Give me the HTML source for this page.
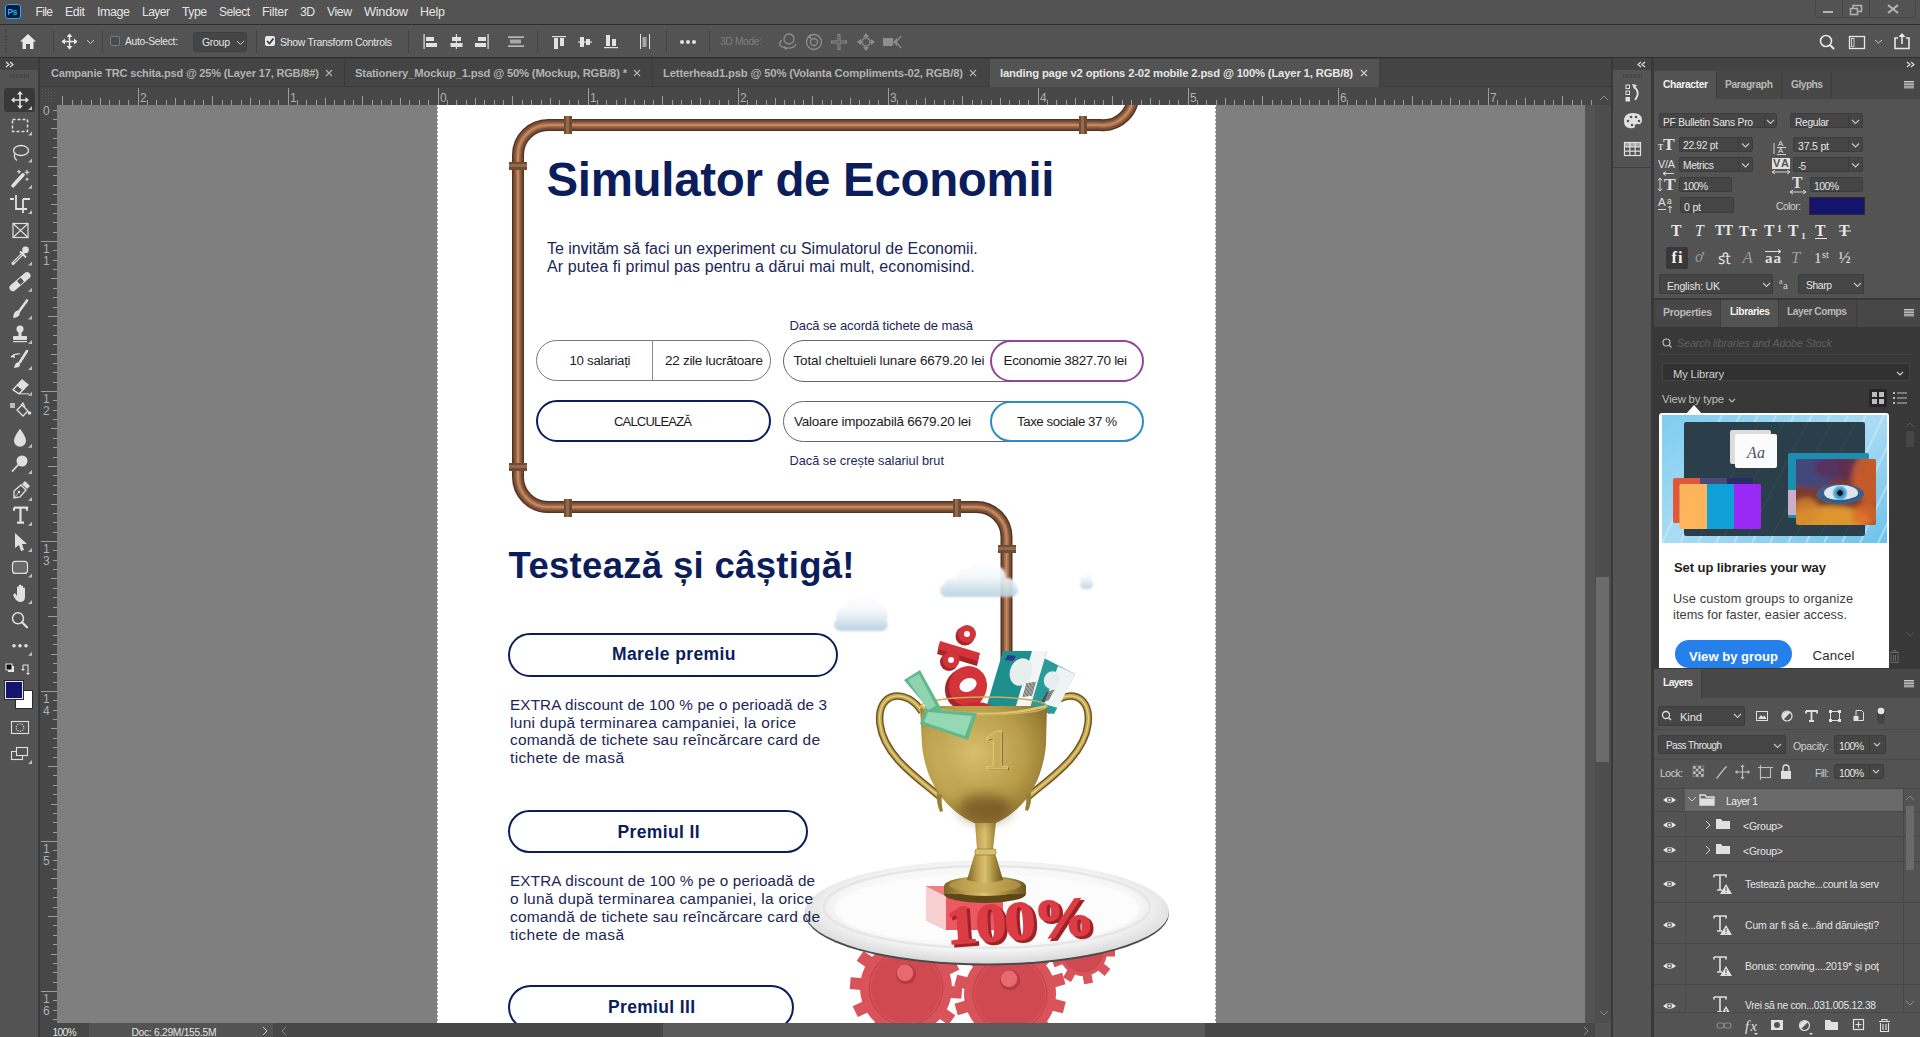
<!DOCTYPE html>
<html><head><meta charset="utf-8">
<style>
*{margin:0;padding:0;box-sizing:border-box}
html,body{width:1920px;height:1037px;overflow:hidden;background:#535353;font-family:"Liberation Sans",sans-serif}
.a{position:absolute}
.t{position:absolute;white-space:nowrap;line-height:1}
svg{position:absolute;overflow:visible}

</style></head>
<body>
<div class="a" style="left:0px;top:0px;width:1920px;height:24px;background:#535353;"></div>
<div class="a" style="left:0px;top:24px;width:1920px;height:1px;background:#2f2f2f;"></div>
<div class="a" style="left:5px;top:4px;width:16px;height:15px;background:#001e36;border:1px solid #31a8ff;border-radius:3px"></div>
<div class="t" style="left:7.50px;top:7.80px;font-size:8.5px;color:#31a8ff;font-weight:700;letter-spacing:-0.397px;">Ps</div>
<div class="t" style="left:35.50px;top:6.34px;font-size:12.0px;color:#e4e4e4;letter-spacing:-0.615px;">File</div>
<div class="t" style="left:65.00px;top:6.13px;font-size:12.25px;color:#e4e4e4;letter-spacing:-0.369px;">Edit</div>
<div class="t" style="left:97.00px;top:5.92px;font-size:12.5px;color:#e4e4e4;letter-spacing:-0.435px;">Image</div>
<div class="t" style="left:142.00px;top:6.34px;font-size:12.0px;color:#e4e4e4;letter-spacing:-0.504px;">Layer</div>
<div class="t" style="left:182.00px;top:6.13px;font-size:12.25px;color:#e4e4e4;letter-spacing:-0.519px;">Type</div>
<div class="t" style="left:219.00px;top:6.34px;font-size:12.0px;color:#e4e4e4;letter-spacing:-0.469px;">Select</div>
<div class="t" style="left:262.00px;top:6.13px;font-size:12.25px;color:#e4e4e4;letter-spacing:-0.244px;">Filter</div>
<div class="t" style="left:300.00px;top:6.13px;font-size:12.25px;color:#e4e4e4;letter-spacing:-0.659px;">3D</div>
<div class="t" style="left:327.00px;top:6.13px;font-size:12.25px;color:#e4e4e4;letter-spacing:-0.443px;">View</div>
<div class="t" style="left:364.00px;top:5.71px;font-size:12.75px;color:#e4e4e4;letter-spacing:-0.269px;">Window</div>
<div class="t" style="left:420.00px;top:5.92px;font-size:12.5px;color:#e4e4e4;letter-spacing:-0.236px;">Help</div>
<div class="a" style="left:1815px;top:-2px;width:101px;height:20px;border:1px solid #484848;border-top:none;border-radius:0 0 4px 4px"></div>
<div class="a" style="left:1842px;top:0px;width:1px;height:18px;background:#484848;"></div>
<div class="a" style="left:1869px;top:0px;width:1px;height:18px;background:#484848;"></div>
<div class="a" style="left:1823px;top:11px;width:10px;height:2px;background:#b4b4b4;"></div>
<svg class="a" style="left:0px;top:0px" width="1920" height="1037"><rect x="1850.5" y="8.5" width="7" height="6" fill="none" stroke="#b4b4b4" stroke-width="1.5"/><path d="M1853,8 V5.5 H1861.5 V11.5 H1858" fill="none" stroke="#b4b4b4" stroke-width="1.5"/><path d="M1888,5 L1898,13 M1898,5 L1888,13" stroke="#b4b4b4" stroke-width="2"/></svg>
<div class="a" style="left:0px;top:25px;width:1920px;height:32px;background:#535353;"></div>
<div class="a" style="left:0px;top:57px;width:1920px;height:1px;background:#2f2f2f;"></div>
<div class="a" style="left:5px;top:30px;width:2px;height:23px;background:transparent;background:repeating-linear-gradient(#3c3c3c 0 1px,transparent 1px 3px)"></div>
<svg class="a" style="left:0px;top:0px" width="1920" height="1037"><path d="M28,34 L20,41.5 H22.5 V49 H26 V44 H30 V49 H33.5 V41.5 H36 Z" fill="#e8e8e8"/></svg>
<div class="a" style="left:53px;top:30px;width:1px;height:23px;background:#434343;"></div>
<svg class="a" style="left:0px;top:0px" width="1920" height="1037"><path d="M69.5,34 V49 M62,41.5 H77" stroke="#e8e8e8" stroke-width="1.5"/><path d="M69.5,33.5 L66.5,37 H72.5Z M69.5,49.5 L66.5,46 H72.5Z M61.5,41.5 L65,38.5 V44.5Z M77.5,41.5 L74,38.5 V44.5Z" fill="#e8e8e8"/></svg>
<svg class="a" style="left:0px;top:0px" width="1920" height="1037"><path d="M87,40 L90.5,43.5 L94,40" fill="none" stroke="#c8c8c8" stroke-width="1"/></svg>
<div class="a" style="left:102px;top:30px;width:1px;height:23px;background:#434343;"></div>
<div class="a" style="left:110px;top:36px;width:10px;height:10px;border:1px solid #7a7a7a;border-radius:2px;background:#4a4a4a"></div>
<div class="t" style="left:125.00px;top:36.82px;font-size:10.25px;color:#e4e4e4;letter-spacing:-0.257px;">Auto-Select:</div>
<div class="a" style="left:193px;top:32px;width:54px;height:20px;background:#454545;border:1px solid #3e3e3e;border-radius:3px"></div>
<div class="t" style="left:202.00px;top:37.11px;font-size:10.5px;color:#e4e4e4;letter-spacing:-0.295px;">Group</div>
<svg class="a" style="left:0px;top:0px" width="1920" height="1037"><path d="M237,41 L240.5,44.5 L244,41" fill="none" stroke="#c8c8c8" stroke-width="1"/></svg>
<div class="a" style="left:256px;top:30px;width:1px;height:23px;background:#434343;"></div>
<div class="a" style="left:265px;top:36px;width:10px;height:10px;background:#e6e6e6;border-radius:2px"></div>
<svg class="a" style="left:0px;top:0px" width="1920" height="1037"><path d="M267,41 L269.5,43.5 L273.5,38.5" fill="none" stroke="#333" stroke-width="1.6"/></svg>
<div class="t" style="left:280.00px;top:36.61px;font-size:10.5px;color:#e4e4e4;letter-spacing:-0.293px;">Show Transform Controls</div>
<div class="a" style="left:408px;top:30px;width:1px;height:23px;background:#434343;"></div>
<svg class="a" style="left:0px;top:0px" width="1920" height="1037"><rect x="423.5" y="34" width="1.2" height="15" fill="#e2e2e2"/><rect x="426" y="37" width="8" height="4" fill="#e2e2e2"/><rect x="426" y="43" width="11" height="4" fill="#e2e2e2"/><rect x="455.8" y="34" width="1.2" height="15" fill="#e2e2e2"/><rect x="452" y="37" width="9" height="4" fill="#e2e2e2"/><rect x="450.5" y="43" width="12" height="4" fill="#e2e2e2"/><rect x="487.5" y="34" width="1.2" height="15" fill="#e2e2e2"/><rect x="478" y="37" width="8" height="4" fill="#e2e2e2"/><rect x="475" y="43" width="11" height="4" fill="#e2e2e2"/><rect x="508" y="36.5" width="16" height="1.2" fill="#e2e2e2"/><rect x="510" y="39.5" width="11" height="4" fill="#a8a8a8"/><rect x="508" y="45.5" width="16" height="1.2" fill="#e2e2e2"/><rect x="537" y="30" width="1" height="23" fill="#434343"/><rect x="552" y="36" width="14" height="1.2" fill="#e2e2e2"/><rect x="554" y="38" width="4" height="11" fill="#e2e2e2"/><rect x="560" y="38" width="4" height="8" fill="#e2e2e2"/><rect x="578" y="41.5" width="14" height="1.2" fill="#e2e2e2"/><rect x="580" y="37" width="4" height="10" fill="#e2e2e2"/><rect x="586" y="39" width="4" height="6" fill="#e2e2e2"/><rect x="604" y="47" width="14" height="1.2" fill="#e2e2e2"/><rect x="606" y="35" width="4" height="11" fill="#e2e2e2"/><rect x="612" y="39" width="4" height="7" fill="#e2e2e2"/><rect x="640" y="34" width="1" height="15" fill="#e2e2e2"/><rect x="642.5" y="37" width="4" height="10" fill="#a8a8a8"/><rect x="649" y="34" width="1" height="15" fill="#e2e2e2"/><rect x="666" y="30" width="1" height="23" fill="#434343"/><circle cx="682" cy="42" r="2" fill="#e2e2e2"/><circle cx="688" cy="42" r="2" fill="#e2e2e2"/><circle cx="694" cy="42" r="2" fill="#e2e2e2"/><rect x="709" y="30" width="1" height="23" fill="#434343"/></svg>
<div class="t" style="left:720.00px;top:36.82px;font-size:10.25px;color:#7e7e7e;letter-spacing:-0.348px;">3D Mode:</div>
<svg class="a" style="left:0px;top:0px" width="1920" height="1037"><circle cx="789" cy="39" r="5" fill="none" stroke="#8e8e8e" stroke-width="1.3"/><path d="M782,40 Q776,46 786,48 Q794,49 796,44" fill="none" stroke="#8e8e8e" stroke-width="1.3"/><path d="M784,46 L788,48 L785,50Z" fill="#8e8e8e"/><circle cx="814" cy="42" r="7.5" fill="none" stroke="#8e8e8e" stroke-width="1.3"/><circle cx="814" cy="42" r="3.5" fill="none" stroke="#8e8e8e" stroke-width="1.3"/><path d="M807,37 L811,34 L811,39Z" fill="#8e8e8e"/><path d="M839,34 V50 M831,42 H847" stroke="#8e8e8e" stroke-width="3"/><path d="M839,35 V49 M832,42 H846" stroke="#535353" stroke-width="1"/><circle cx="866" cy="42" r="4" fill="none" stroke="#8e8e8e" stroke-width="1.5"/><path d="M866,33 L863,37 H869Z M866,51 L863,47 H869Z M857,42 L861,39 V45Z M875,42 L871,39 V45Z" fill="#8e8e8e"/><rect x="883" y="38" width="10" height="8" fill="#8e8e8e"/><path d="M893,42 L897,38 V46Z" fill="#8e8e8e"/><path d="M901,36 L896,42 L901,48" fill="none" stroke="#8e8e8e" stroke-width="1.2"/></svg>
<svg class="a" style="left:0px;top:0px" width="1920" height="1037"><circle cx="1826" cy="41" r="5.5" fill="none" stroke="#e8e8e8" stroke-width="1.6"/><path d="M1830,45 L1834,49" stroke="#e8e8e8" stroke-width="2"/><rect x="1849.5" y="36.5" width="15" height="12" fill="none" stroke="#e8e8e8" stroke-width="1.3"/><rect x="1851.5" y="38.5" width="2.5" height="8" fill="none" stroke="#e8e8e8" stroke-width="0.8"/><path d="M1875,40 L1878.5,43 L1882,40" fill="none" stroke="#c8c8c8" stroke-width="1"/><path d="M1898,38 H1895 V48.5 H1909 V38 H1906" fill="none" stroke="#e8e8e8" stroke-width="1.6"/><path d="M1902,44 V35" stroke="#e8e8e8" stroke-width="1.6"/><path d="M1902,33 L1898.5,37 H1905.5Z" fill="#e8e8e8"/></svg>
<div class="a" style="left:0px;top:58px;width:38px;height:979px;background:#535353;"></div>
<div class="a" style="left:38px;top:58px;width:2px;height:979px;background:#393939;"></div>
<div class="a" style="left:0px;top:58px;width:38px;height:12px;background:#434343;"></div>
<div class="a" style="left:4px;top:88px;width:31px;height:24px;background:#383838;border-radius:3px"></div>
<svg class="a" style="left:0px;top:0px" width="1920" height="1037"><path d="M6,62 L9,64.5 L6,67 M10,62 L13,64.5 L10,67" fill="none" stroke="#e0e0e0" stroke-width="1.2"/><rect x="10" y="74" width="1" height="4" fill="#444"/><rect x="12" y="74" width="1" height="4" fill="#444"/><rect x="14" y="74" width="1" height="4" fill="#444"/><rect x="16" y="74" width="1" height="4" fill="#444"/><rect x="18" y="74" width="1" height="4" fill="#444"/><rect x="20" y="74" width="1" height="4" fill="#444"/><rect x="22" y="74" width="1" height="4" fill="#444"/><rect x="24" y="74" width="1" height="4" fill="#444"/><rect x="26" y="74" width="1" height="4" fill="#444"/><rect x="28" y="74" width="1" height="4" fill="#444"/><path d="M20,92 V108 M12,100 H28" stroke="#e0e0e0" stroke-width="1.6"/><path d="M20,91 L17,94.5 H23Z M20,109 L17,105.5 H23Z M11,100 L14.5,97 V103Z M29,100 L25.5,97 V103Z" fill="#e0e0e0"/><path d="M32,106 L32,110 L28,110Z" fill="#c0c0c0"/><rect x="12.5" y="119.5" width="15" height="12" fill="none" stroke="#e0e0e0" stroke-width="1.5" stroke-dasharray="3,2"/><path d="M32,131.5 L32,135.5 L28,135.5Z" fill="#c0c0c0"/><ellipse cx="21" cy="150.5" rx="7.5" ry="5" fill="none" stroke="#e0e0e0" stroke-width="1.3"/><path d="M15,153.5 Q13,157.5 17,160.5" fill="none" stroke="#e0e0e0" stroke-width="1.3"/><path d="M32,158.5 L32,162.5 L28,162.5Z" fill="#c0c0c0"/><path d="M13,185.8 L23,174.8" stroke="#e0e0e0" stroke-width="3.5" stroke-linecap="round"/><path d="M19,169.8 V173.8 M17,171.8 H21 M27,169.8 V174.8 M24.5,172.3 H29.5 M27,177.8 V180.8 M25.5,179.3 H28.5" stroke="#e0e0e0" stroke-width="1.1"/><path d="M32,184.8 L32,188.8 L28,188.8Z" fill="#c0c0c0"/><path d="M10,199 H14 M16,195 V209 H27 M23,199 H30 M23,199 V213" fill="none" stroke="#e0e0e0" stroke-width="1.8"/><path d="M32,210 L32,214 L28,214Z" fill="#c0c0c0"/><rect x="13" y="223.5" width="15" height="14" fill="none" stroke="#e0e0e0" stroke-width="1.2"/><path d="M13,223.5 L28,237.5 M28,223.5 L13,237.5" stroke="#e0e0e0" stroke-width="1.1"/><path d="M13,263.4 L23,253.4" stroke="#e0e0e0" stroke-width="3" stroke-linecap="round"/><path d="M14,262.4 L22,254.4" stroke="#535353" stroke-width="1"/><path d="M20,251.4 L26,257.4" stroke="#e0e0e0" stroke-width="2"/><circle cx="25.5" cy="249.9" r="3.3" fill="#e0e0e0"/><path d="M32,261.4 L32,265.4 L28,265.4Z" fill="#c0c0c0"/><path d="M13,287.7 L27,275.7" stroke="#e0e0e0" stroke-width="7" stroke-linecap="round"/><rect x="18" y="278.7" width="5" height="5" fill="#535353" transform="rotate(-42 20.5 281.2)"/><path d="M32,287.7 L32,291.7 L28,291.7Z" fill="#c0c0c0"/><path d="M27,300.4 L19,311.4" stroke="#e0e0e0" stroke-width="2.5" stroke-linecap="round"/><path d="M13,317.4 Q14,310.4 18,310.4 Q21,312.4 19,315.4 Q16,318.4 13,317.4Z" fill="#e0e0e0"/><path d="M32,315.4 L32,319.4 L28,319.4Z" fill="#c0c0c0"/><circle cx="20" cy="329" r="3.5" fill="#e0e0e0"/><rect x="18.5" y="332" width="3" height="4" fill="#e0e0e0"/><rect x="13" y="336" width="14" height="4" rx="1" fill="#e0e0e0"/><rect x="13" y="341" width="14" height="1.2" fill="#e0e0e0"/><path d="M32,340 L32,344 L28,344Z" fill="#c0c0c0"/><path d="M27,351 L20,362" stroke="#e0e0e0" stroke-width="2.5" stroke-linecap="round"/><path d="M14,368 Q15,362 19,362 Q21,364 19,367Z" fill="#e0e0e0"/><path d="M11,357 Q15,353 20,354" fill="none" stroke="#e0e0e0" stroke-width="1.2"/><path d="M11,357 L14,354 L15,358Z" fill="#e0e0e0"/><path d="M32,366 L32,370 L28,370Z" fill="#c0c0c0"/><path d="M13,389.8 L22,379.8 L28,384.8 L19,393.8Z" fill="none" stroke="#e0e0e0" stroke-width="1.3"/><path d="M17,385.8 L22,379.8 L28,384.8 L23,390.8Z" fill="#e0e0e0"/><path d="M19,393.8 H29" stroke="#e0e0e0" stroke-width="1"/><path d="M32,391.8 L32,395.8 L28,395.8Z" fill="#c0c0c0"/><rect x="10" y="403" width="5" height="5" fill="#bbb"/><path d="M17,410 L22,405 L28,411 L23,416Z" fill="none" stroke="#e0e0e0" stroke-width="1.3"/><path d="M21,405 L23,403 L25,407" fill="none" stroke="#e0e0e0" stroke-width="1.1"/><circle cx="29.5" cy="413" r="1.8" fill="#e0e0e0"/><path d="M20,428.8 Q26,436.8 26,440.8 A6,6 0 0 1 14,440.8 Q14,436.8 20,428.8Z" fill="#e0e0e0"/><path d="M32,443.8 L32,447.8 L28,447.8Z" fill="#c0c0c0"/><circle cx="22" cy="461" r="5.5" fill="#e0e0e0"/><path d="M18,465 L12.5,471" stroke="#e0e0e0" stroke-width="1.8" stroke-linecap="round"/><path d="M32,470 L32,474 L28,474Z" fill="#c0c0c0"/><path d="M14,498 L14,491 L21,485 L26,490 L20,497Z" fill="none" stroke="#e0e0e0" stroke-width="1.3"/><path d="M22,484 L25,481 L30,486 L27,489Z" fill="#e0e0e0"/><circle cx="19" cy="492" r="1.2" fill="#e0e0e0"/><path d="M14,498 L19,492" stroke="#e0e0e0" stroke-width="0.8"/><path d="M32,497 L32,501 L28,501Z" fill="#c0c0c0"/><path d="M14,507.70000000000005 H27 V510.70000000000005 M14,507.70000000000005 V510.70000000000005 M20.5,507.70000000000005 V522.7 M17,522.7 H24" fill="none" stroke="#e0e0e0" stroke-width="2.2"/><path d="M32,521.7 L32,525.7 L28,525.7Z" fill="#c0c0c0"/><path d="M15,533 L27,544 L22,544 L24,550 L21,551 L19,545 L15,548Z" fill="#e0e0e0"/><path d="M32,548 L32,552 L28,552Z" fill="#c0c0c0"/><rect x="12.5" y="561.4" width="15" height="12" rx="3" fill="#6a6a6a" stroke="#e0e0e0" stroke-width="1.2"/><path d="M32,573.4 L32,577.4 L28,577.4Z" fill="#c0c0c0"/><path d="M13,594.9 L15,592.9 L17,595.9 V586.9 Q18,585.4 19,586.9 V592.9 V584.9 Q20,583.9 21,584.9 V592.9 V585.9 Q22,584.9 23,585.9 V592.9 V587.9 Q24,586.9 25,587.9 V596.9 Q25,601.9 20,601.9 Q16,601.9 13,594.9Z" fill="#e0e0e0"/><path d="M32,599.9 L32,603.9 L28,603.9Z" fill="#c0c0c0"/><circle cx="18" cy="618.3" r="5.5" fill="none" stroke="#e0e0e0" stroke-width="1.5"/><path d="M22,622.3 L27,627.3" stroke="#e0e0e0" stroke-width="2.2" stroke-linecap="round"/><circle cx="14" cy="645.7" r="1.8" fill="#e0e0e0"/><circle cx="20" cy="645.7" r="1.8" fill="#e0e0e0"/><circle cx="26" cy="645.7" r="1.8" fill="#e0e0e0"/><path d="M32,651.7 L32,655.7 L28,655.7Z" fill="#c0c0c0"/><rect x="8" y="666" width="6" height="6" fill="#e6e6e6"/><rect x="6" y="664" width="6" height="6" fill="#111" stroke="#e6e6e6" stroke-width="1"/><path d="M23,665 V670 M23,665 H28 V674" fill="none" stroke="#e0e0e0" stroke-width="1.1"/><path d="M21,669 L23,671 L25,669Z M26,673 L28,675 L30,673Z" fill="#e0e0e0"/></svg>
<div class="a" style="left:15px;top:690px;width:18px;height:19px;background:#ffffff;border:1px solid #2a2a2a"></div>
<div class="a" style="left:5px;top:681px;width:18px;height:18px;background:#14146c;border:1px solid #e6e6e6;outline:1px solid #2a2a2a"></div>
<svg class="a" style="left:0px;top:0px" width="1920" height="1037"><rect x="11.5" y="721.5" width="17" height="12" fill="none" stroke="#e0e0e0" stroke-width="1.1"/><circle cx="20" cy="727.5" r="3.8" fill="none" stroke="#e0e0e0" stroke-width="1.1" stroke-dasharray="1.2,1.2"/><rect x="11.5" y="751.5" width="11" height="8" fill="#535353" stroke="#e0e0e0" stroke-width="1.1"/><rect x="16.5" y="747.5" width="11" height="8" fill="#535353" stroke="#e0e0e0" stroke-width="1.1"/><path d="M32,760 L32,764 L28,764Z" fill="#c0c0c0"/></svg>
<div class="a" style="left:40px;top:58px;width:1571px;height:29px;background:#444444;"></div>
<div class="a" style="left:40px;top:58px;width:1571px;height:1px;background:#3a3a3a;"></div>
<div class="a" style="left:40px;top:86px;width:1571px;height:1px;background:#3a3a3a;"></div>
<div class="t" style="left:51.00px;top:68.19px;font-size:11.0px;color:#b2b2b2;font-weight:700;letter-spacing:-0.161px;">Campanie TRC schita.psd @ 25% (Layer 17, RGB/8#)</div>
<svg class="a" style="left:0px;top:0px" width="1920" height="1037"><path d="M326,70 L332,76 M332,70 L326,76" stroke="#b2b2b2" stroke-width="1.1"/></svg>
<div class="a" style="left:344px;top:59px;width:1px;height:28px;background:#3a3a3a;"></div>
<div class="t" style="left:355.00px;top:67.98px;font-size:11.25px;color:#b2b2b2;font-weight:700;letter-spacing:-0.182px;">Stationery_Mockup_1.psd @ 50% (Mockup, RGB/8) *</div>
<svg class="a" style="left:0px;top:0px" width="1920" height="1037"><path d="M634,70 L640,76 M640,70 L634,76" stroke="#b2b2b2" stroke-width="1.1"/></svg>
<div class="a" style="left:652px;top:59px;width:1px;height:28px;background:#3a3a3a;"></div>
<div class="t" style="left:663.00px;top:67.98px;font-size:11.25px;color:#b2b2b2;font-weight:700;letter-spacing:-0.160px;">Letterhead1.psb @ 50% (Volanta Compliments-02, RGB/8)</div>
<svg class="a" style="left:0px;top:0px" width="1920" height="1037"><path d="M970,70 L976,76 M976,70 L970,76" stroke="#b2b2b2" stroke-width="1.1"/></svg>
<div class="a" style="left:990px;top:59px;width:1px;height:28px;background:#3a3a3a;"></div>
<div class="a" style="left:990px;top:59px;width:389px;height:28px;background:#535353;"></div>
<div class="t" style="left:1000.00px;top:67.98px;font-size:11.25px;color:#e6e6e6;font-weight:700;letter-spacing:-0.155px;">landing page v2 options 2-02 mobile 2.psd @ 100% (Layer 1, RGB/8)</div>
<svg class="a" style="left:0px;top:0px" width="1920" height="1037"><path d="M1361,70 L1367,76 M1367,70 L1361,76" stroke="#d0d0d0" stroke-width="1.1"/></svg>
<div class="a" style="left:40px;top:87px;width:1571px;height:18px;background:#474747;"></div>
<div class="a" style="left:40px;top:105px;width:17px;height:918px;background:#474747;"></div>
<div class="a" style="left:41px;top:88px;width:15px;height:16px;background:transparent;background-image:radial-gradient(#5a5a5a 0.6px,transparent 0.8px);background-size:3px 3px"></div>
<svg class="a" style="left:0px;top:0px" width="1920" height="1037"><line x1="62.5" y1="96" x2="62.5" y2="105" stroke="#9c9c9c" stroke-width="1"/><line x1="72.5" y1="100" x2="72.5" y2="105" stroke="#9c9c9c" stroke-width="1"/><line x1="81.5" y1="100" x2="81.5" y2="105" stroke="#9c9c9c" stroke-width="1"/><line x1="91.5" y1="100" x2="91.5" y2="105" stroke="#9c9c9c" stroke-width="1"/><line x1="100.5" y1="98" x2="100.5" y2="105" stroke="#9c9c9c" stroke-width="1"/><line x1="109.5" y1="100" x2="109.5" y2="105" stroke="#9c9c9c" stroke-width="1"/><line x1="119.5" y1="100" x2="119.5" y2="105" stroke="#9c9c9c" stroke-width="1"/><line x1="128.5" y1="100" x2="128.5" y2="105" stroke="#9c9c9c" stroke-width="1"/><line x1="138.5" y1="88" x2="138.5" y2="105" stroke="#9c9c9c" stroke-width="1"/><line x1="147.5" y1="100" x2="147.5" y2="105" stroke="#9c9c9c" stroke-width="1"/><line x1="156.5" y1="100" x2="156.5" y2="105" stroke="#9c9c9c" stroke-width="1"/><line x1="166.5" y1="100" x2="166.5" y2="105" stroke="#9c9c9c" stroke-width="1"/><line x1="175.5" y1="98" x2="175.5" y2="105" stroke="#9c9c9c" stroke-width="1"/><line x1="184.5" y1="100" x2="184.5" y2="105" stroke="#9c9c9c" stroke-width="1"/><line x1="194.5" y1="100" x2="194.5" y2="105" stroke="#9c9c9c" stroke-width="1"/><line x1="203.5" y1="100" x2="203.5" y2="105" stroke="#9c9c9c" stroke-width="1"/><line x1="212.5" y1="96" x2="212.5" y2="105" stroke="#9c9c9c" stroke-width="1"/><line x1="222.5" y1="100" x2="222.5" y2="105" stroke="#9c9c9c" stroke-width="1"/><line x1="231.5" y1="100" x2="231.5" y2="105" stroke="#9c9c9c" stroke-width="1"/><line x1="241.5" y1="100" x2="241.5" y2="105" stroke="#9c9c9c" stroke-width="1"/><line x1="250.5" y1="98" x2="250.5" y2="105" stroke="#9c9c9c" stroke-width="1"/><line x1="259.5" y1="100" x2="259.5" y2="105" stroke="#9c9c9c" stroke-width="1"/><line x1="269.5" y1="100" x2="269.5" y2="105" stroke="#9c9c9c" stroke-width="1"/><line x1="278.5" y1="100" x2="278.5" y2="105" stroke="#9c9c9c" stroke-width="1"/><line x1="288.5" y1="88" x2="288.5" y2="105" stroke="#9c9c9c" stroke-width="1"/><line x1="297.5" y1="100" x2="297.5" y2="105" stroke="#9c9c9c" stroke-width="1"/><line x1="306.5" y1="100" x2="306.5" y2="105" stroke="#9c9c9c" stroke-width="1"/><line x1="316.5" y1="100" x2="316.5" y2="105" stroke="#9c9c9c" stroke-width="1"/><line x1="325.5" y1="98" x2="325.5" y2="105" stroke="#9c9c9c" stroke-width="1"/><line x1="334.5" y1="100" x2="334.5" y2="105" stroke="#9c9c9c" stroke-width="1"/><line x1="344.5" y1="100" x2="344.5" y2="105" stroke="#9c9c9c" stroke-width="1"/><line x1="353.5" y1="100" x2="353.5" y2="105" stroke="#9c9c9c" stroke-width="1"/><line x1="362.5" y1="96" x2="362.5" y2="105" stroke="#9c9c9c" stroke-width="1"/><line x1="372.5" y1="100" x2="372.5" y2="105" stroke="#9c9c9c" stroke-width="1"/><line x1="381.5" y1="100" x2="381.5" y2="105" stroke="#9c9c9c" stroke-width="1"/><line x1="391.5" y1="100" x2="391.5" y2="105" stroke="#9c9c9c" stroke-width="1"/><line x1="400.5" y1="98" x2="400.5" y2="105" stroke="#9c9c9c" stroke-width="1"/><line x1="409.5" y1="100" x2="409.5" y2="105" stroke="#9c9c9c" stroke-width="1"/><line x1="419.5" y1="100" x2="419.5" y2="105" stroke="#9c9c9c" stroke-width="1"/><line x1="428.5" y1="100" x2="428.5" y2="105" stroke="#9c9c9c" stroke-width="1"/><line x1="438.5" y1="88" x2="438.5" y2="105" stroke="#9c9c9c" stroke-width="1"/><line x1="447.5" y1="100" x2="447.5" y2="105" stroke="#9c9c9c" stroke-width="1"/><line x1="456.5" y1="100" x2="456.5" y2="105" stroke="#9c9c9c" stroke-width="1"/><line x1="466.5" y1="100" x2="466.5" y2="105" stroke="#9c9c9c" stroke-width="1"/><line x1="475.5" y1="98" x2="475.5" y2="105" stroke="#9c9c9c" stroke-width="1"/><line x1="484.5" y1="100" x2="484.5" y2="105" stroke="#9c9c9c" stroke-width="1"/><line x1="494.5" y1="100" x2="494.5" y2="105" stroke="#9c9c9c" stroke-width="1"/><line x1="503.5" y1="100" x2="503.5" y2="105" stroke="#9c9c9c" stroke-width="1"/><line x1="512.5" y1="96" x2="512.5" y2="105" stroke="#9c9c9c" stroke-width="1"/><line x1="522.5" y1="100" x2="522.5" y2="105" stroke="#9c9c9c" stroke-width="1"/><line x1="531.5" y1="100" x2="531.5" y2="105" stroke="#9c9c9c" stroke-width="1"/><line x1="541.5" y1="100" x2="541.5" y2="105" stroke="#9c9c9c" stroke-width="1"/><line x1="550.5" y1="98" x2="550.5" y2="105" stroke="#9c9c9c" stroke-width="1"/><line x1="559.5" y1="100" x2="559.5" y2="105" stroke="#9c9c9c" stroke-width="1"/><line x1="569.5" y1="100" x2="569.5" y2="105" stroke="#9c9c9c" stroke-width="1"/><line x1="578.5" y1="100" x2="578.5" y2="105" stroke="#9c9c9c" stroke-width="1"/><line x1="588.5" y1="88" x2="588.5" y2="105" stroke="#9c9c9c" stroke-width="1"/><line x1="597.5" y1="100" x2="597.5" y2="105" stroke="#9c9c9c" stroke-width="1"/><line x1="606.5" y1="100" x2="606.5" y2="105" stroke="#9c9c9c" stroke-width="1"/><line x1="616.5" y1="100" x2="616.5" y2="105" stroke="#9c9c9c" stroke-width="1"/><line x1="625.5" y1="98" x2="625.5" y2="105" stroke="#9c9c9c" stroke-width="1"/><line x1="634.5" y1="100" x2="634.5" y2="105" stroke="#9c9c9c" stroke-width="1"/><line x1="644.5" y1="100" x2="644.5" y2="105" stroke="#9c9c9c" stroke-width="1"/><line x1="653.5" y1="100" x2="653.5" y2="105" stroke="#9c9c9c" stroke-width="1"/><line x1="662.5" y1="96" x2="662.5" y2="105" stroke="#9c9c9c" stroke-width="1"/><line x1="672.5" y1="100" x2="672.5" y2="105" stroke="#9c9c9c" stroke-width="1"/><line x1="681.5" y1="100" x2="681.5" y2="105" stroke="#9c9c9c" stroke-width="1"/><line x1="691.5" y1="100" x2="691.5" y2="105" stroke="#9c9c9c" stroke-width="1"/><line x1="700.5" y1="98" x2="700.5" y2="105" stroke="#9c9c9c" stroke-width="1"/><line x1="709.5" y1="100" x2="709.5" y2="105" stroke="#9c9c9c" stroke-width="1"/><line x1="719.5" y1="100" x2="719.5" y2="105" stroke="#9c9c9c" stroke-width="1"/><line x1="728.5" y1="100" x2="728.5" y2="105" stroke="#9c9c9c" stroke-width="1"/><line x1="738.5" y1="88" x2="738.5" y2="105" stroke="#9c9c9c" stroke-width="1"/><line x1="747.5" y1="100" x2="747.5" y2="105" stroke="#9c9c9c" stroke-width="1"/><line x1="756.5" y1="100" x2="756.5" y2="105" stroke="#9c9c9c" stroke-width="1"/><line x1="766.5" y1="100" x2="766.5" y2="105" stroke="#9c9c9c" stroke-width="1"/><line x1="775.5" y1="98" x2="775.5" y2="105" stroke="#9c9c9c" stroke-width="1"/><line x1="784.5" y1="100" x2="784.5" y2="105" stroke="#9c9c9c" stroke-width="1"/><line x1="794.5" y1="100" x2="794.5" y2="105" stroke="#9c9c9c" stroke-width="1"/><line x1="803.5" y1="100" x2="803.5" y2="105" stroke="#9c9c9c" stroke-width="1"/><line x1="812.5" y1="96" x2="812.5" y2="105" stroke="#9c9c9c" stroke-width="1"/><line x1="822.5" y1="100" x2="822.5" y2="105" stroke="#9c9c9c" stroke-width="1"/><line x1="831.5" y1="100" x2="831.5" y2="105" stroke="#9c9c9c" stroke-width="1"/><line x1="841.5" y1="100" x2="841.5" y2="105" stroke="#9c9c9c" stroke-width="1"/><line x1="850.5" y1="98" x2="850.5" y2="105" stroke="#9c9c9c" stroke-width="1"/><line x1="859.5" y1="100" x2="859.5" y2="105" stroke="#9c9c9c" stroke-width="1"/><line x1="869.5" y1="100" x2="869.5" y2="105" stroke="#9c9c9c" stroke-width="1"/><line x1="878.5" y1="100" x2="878.5" y2="105" stroke="#9c9c9c" stroke-width="1"/><line x1="888.5" y1="88" x2="888.5" y2="105" stroke="#9c9c9c" stroke-width="1"/><line x1="897.5" y1="100" x2="897.5" y2="105" stroke="#9c9c9c" stroke-width="1"/><line x1="906.5" y1="100" x2="906.5" y2="105" stroke="#9c9c9c" stroke-width="1"/><line x1="916.5" y1="100" x2="916.5" y2="105" stroke="#9c9c9c" stroke-width="1"/><line x1="925.5" y1="98" x2="925.5" y2="105" stroke="#9c9c9c" stroke-width="1"/><line x1="934.5" y1="100" x2="934.5" y2="105" stroke="#9c9c9c" stroke-width="1"/><line x1="944.5" y1="100" x2="944.5" y2="105" stroke="#9c9c9c" stroke-width="1"/><line x1="953.5" y1="100" x2="953.5" y2="105" stroke="#9c9c9c" stroke-width="1"/><line x1="962.5" y1="96" x2="962.5" y2="105" stroke="#9c9c9c" stroke-width="1"/><line x1="972.5" y1="100" x2="972.5" y2="105" stroke="#9c9c9c" stroke-width="1"/><line x1="981.5" y1="100" x2="981.5" y2="105" stroke="#9c9c9c" stroke-width="1"/><line x1="991.5" y1="100" x2="991.5" y2="105" stroke="#9c9c9c" stroke-width="1"/><line x1="1000.5" y1="98" x2="1000.5" y2="105" stroke="#9c9c9c" stroke-width="1"/><line x1="1009.5" y1="100" x2="1009.5" y2="105" stroke="#9c9c9c" stroke-width="1"/><line x1="1019.5" y1="100" x2="1019.5" y2="105" stroke="#9c9c9c" stroke-width="1"/><line x1="1028.5" y1="100" x2="1028.5" y2="105" stroke="#9c9c9c" stroke-width="1"/><line x1="1038.5" y1="88" x2="1038.5" y2="105" stroke="#9c9c9c" stroke-width="1"/><line x1="1047.5" y1="100" x2="1047.5" y2="105" stroke="#9c9c9c" stroke-width="1"/><line x1="1056.5" y1="100" x2="1056.5" y2="105" stroke="#9c9c9c" stroke-width="1"/><line x1="1066.5" y1="100" x2="1066.5" y2="105" stroke="#9c9c9c" stroke-width="1"/><line x1="1075.5" y1="98" x2="1075.5" y2="105" stroke="#9c9c9c" stroke-width="1"/><line x1="1084.5" y1="100" x2="1084.5" y2="105" stroke="#9c9c9c" stroke-width="1"/><line x1="1094.5" y1="100" x2="1094.5" y2="105" stroke="#9c9c9c" stroke-width="1"/><line x1="1103.5" y1="100" x2="1103.5" y2="105" stroke="#9c9c9c" stroke-width="1"/><line x1="1112.5" y1="96" x2="1112.5" y2="105" stroke="#9c9c9c" stroke-width="1"/><line x1="1122.5" y1="100" x2="1122.5" y2="105" stroke="#9c9c9c" stroke-width="1"/><line x1="1131.5" y1="100" x2="1131.5" y2="105" stroke="#9c9c9c" stroke-width="1"/><line x1="1141.5" y1="100" x2="1141.5" y2="105" stroke="#9c9c9c" stroke-width="1"/><line x1="1150.5" y1="98" x2="1150.5" y2="105" stroke="#9c9c9c" stroke-width="1"/><line x1="1159.5" y1="100" x2="1159.5" y2="105" stroke="#9c9c9c" stroke-width="1"/><line x1="1169.5" y1="100" x2="1169.5" y2="105" stroke="#9c9c9c" stroke-width="1"/><line x1="1178.5" y1="100" x2="1178.5" y2="105" stroke="#9c9c9c" stroke-width="1"/><line x1="1188.5" y1="88" x2="1188.5" y2="105" stroke="#9c9c9c" stroke-width="1"/><line x1="1197.5" y1="100" x2="1197.5" y2="105" stroke="#9c9c9c" stroke-width="1"/><line x1="1206.5" y1="100" x2="1206.5" y2="105" stroke="#9c9c9c" stroke-width="1"/><line x1="1216.5" y1="100" x2="1216.5" y2="105" stroke="#9c9c9c" stroke-width="1"/><line x1="1225.5" y1="98" x2="1225.5" y2="105" stroke="#9c9c9c" stroke-width="1"/><line x1="1234.5" y1="100" x2="1234.5" y2="105" stroke="#9c9c9c" stroke-width="1"/><line x1="1244.5" y1="100" x2="1244.5" y2="105" stroke="#9c9c9c" stroke-width="1"/><line x1="1253.5" y1="100" x2="1253.5" y2="105" stroke="#9c9c9c" stroke-width="1"/><line x1="1262.5" y1="96" x2="1262.5" y2="105" stroke="#9c9c9c" stroke-width="1"/><line x1="1272.5" y1="100" x2="1272.5" y2="105" stroke="#9c9c9c" stroke-width="1"/><line x1="1281.5" y1="100" x2="1281.5" y2="105" stroke="#9c9c9c" stroke-width="1"/><line x1="1291.5" y1="100" x2="1291.5" y2="105" stroke="#9c9c9c" stroke-width="1"/><line x1="1300.5" y1="98" x2="1300.5" y2="105" stroke="#9c9c9c" stroke-width="1"/><line x1="1309.5" y1="100" x2="1309.5" y2="105" stroke="#9c9c9c" stroke-width="1"/><line x1="1319.5" y1="100" x2="1319.5" y2="105" stroke="#9c9c9c" stroke-width="1"/><line x1="1328.5" y1="100" x2="1328.5" y2="105" stroke="#9c9c9c" stroke-width="1"/><line x1="1338.5" y1="88" x2="1338.5" y2="105" stroke="#9c9c9c" stroke-width="1"/><line x1="1347.5" y1="100" x2="1347.5" y2="105" stroke="#9c9c9c" stroke-width="1"/><line x1="1356.5" y1="100" x2="1356.5" y2="105" stroke="#9c9c9c" stroke-width="1"/><line x1="1366.5" y1="100" x2="1366.5" y2="105" stroke="#9c9c9c" stroke-width="1"/><line x1="1375.5" y1="98" x2="1375.5" y2="105" stroke="#9c9c9c" stroke-width="1"/><line x1="1384.5" y1="100" x2="1384.5" y2="105" stroke="#9c9c9c" stroke-width="1"/><line x1="1394.5" y1="100" x2="1394.5" y2="105" stroke="#9c9c9c" stroke-width="1"/><line x1="1403.5" y1="100" x2="1403.5" y2="105" stroke="#9c9c9c" stroke-width="1"/><line x1="1412.5" y1="96" x2="1412.5" y2="105" stroke="#9c9c9c" stroke-width="1"/><line x1="1422.5" y1="100" x2="1422.5" y2="105" stroke="#9c9c9c" stroke-width="1"/><line x1="1431.5" y1="100" x2="1431.5" y2="105" stroke="#9c9c9c" stroke-width="1"/><line x1="1441.5" y1="100" x2="1441.5" y2="105" stroke="#9c9c9c" stroke-width="1"/><line x1="1450.5" y1="98" x2="1450.5" y2="105" stroke="#9c9c9c" stroke-width="1"/><line x1="1459.5" y1="100" x2="1459.5" y2="105" stroke="#9c9c9c" stroke-width="1"/><line x1="1469.5" y1="100" x2="1469.5" y2="105" stroke="#9c9c9c" stroke-width="1"/><line x1="1478.5" y1="100" x2="1478.5" y2="105" stroke="#9c9c9c" stroke-width="1"/><line x1="1488.5" y1="88" x2="1488.5" y2="105" stroke="#9c9c9c" stroke-width="1"/><line x1="1497.5" y1="100" x2="1497.5" y2="105" stroke="#9c9c9c" stroke-width="1"/><line x1="1506.5" y1="100" x2="1506.5" y2="105" stroke="#9c9c9c" stroke-width="1"/><line x1="1516.5" y1="100" x2="1516.5" y2="105" stroke="#9c9c9c" stroke-width="1"/><line x1="1525.5" y1="98" x2="1525.5" y2="105" stroke="#9c9c9c" stroke-width="1"/><line x1="1534.5" y1="100" x2="1534.5" y2="105" stroke="#9c9c9c" stroke-width="1"/><line x1="1544.5" y1="100" x2="1544.5" y2="105" stroke="#9c9c9c" stroke-width="1"/><line x1="1553.5" y1="100" x2="1553.5" y2="105" stroke="#9c9c9c" stroke-width="1"/><line x1="1562.5" y1="96" x2="1562.5" y2="105" stroke="#9c9c9c" stroke-width="1"/><line x1="1572.5" y1="100" x2="1572.5" y2="105" stroke="#9c9c9c" stroke-width="1"/><line x1="1581.5" y1="100" x2="1581.5" y2="105" stroke="#9c9c9c" stroke-width="1"/><line x1="1591.5" y1="100" x2="1591.5" y2="105" stroke="#9c9c9c" stroke-width="1"/><line x1="53" y1="110.5" x2="57" y2="110.5" stroke="#9c9c9c" stroke-width="1"/><line x1="53" y1="119.5" x2="57" y2="119.5" stroke="#9c9c9c" stroke-width="1"/><line x1="51" y1="128.5" x2="57" y2="128.5" stroke="#9c9c9c" stroke-width="1"/><line x1="53" y1="138.5" x2="57" y2="138.5" stroke="#9c9c9c" stroke-width="1"/><line x1="53" y1="147.5" x2="57" y2="147.5" stroke="#9c9c9c" stroke-width="1"/><line x1="53" y1="157.5" x2="57" y2="157.5" stroke="#9c9c9c" stroke-width="1"/><line x1="48" y1="166.5" x2="57" y2="166.5" stroke="#9c9c9c" stroke-width="1"/><line x1="53" y1="175.5" x2="57" y2="175.5" stroke="#9c9c9c" stroke-width="1"/><line x1="53" y1="185.5" x2="57" y2="185.5" stroke="#9c9c9c" stroke-width="1"/><line x1="53" y1="194.5" x2="57" y2="194.5" stroke="#9c9c9c" stroke-width="1"/><line x1="51" y1="204.5" x2="57" y2="204.5" stroke="#9c9c9c" stroke-width="1"/><line x1="53" y1="213.5" x2="57" y2="213.5" stroke="#9c9c9c" stroke-width="1"/><line x1="53" y1="222.5" x2="57" y2="222.5" stroke="#9c9c9c" stroke-width="1"/><line x1="53" y1="232.5" x2="57" y2="232.5" stroke="#9c9c9c" stroke-width="1"/><line x1="41" y1="241.5" x2="57" y2="241.5" stroke="#9c9c9c" stroke-width="1"/><line x1="53" y1="250.5" x2="57" y2="250.5" stroke="#9c9c9c" stroke-width="1"/><line x1="53" y1="260.5" x2="57" y2="260.5" stroke="#9c9c9c" stroke-width="1"/><line x1="53" y1="269.5" x2="57" y2="269.5" stroke="#9c9c9c" stroke-width="1"/><line x1="51" y1="278.5" x2="57" y2="278.5" stroke="#9c9c9c" stroke-width="1"/><line x1="53" y1="288.5" x2="57" y2="288.5" stroke="#9c9c9c" stroke-width="1"/><line x1="53" y1="297.5" x2="57" y2="297.5" stroke="#9c9c9c" stroke-width="1"/><line x1="53" y1="307.5" x2="57" y2="307.5" stroke="#9c9c9c" stroke-width="1"/><line x1="48" y1="316.5" x2="57" y2="316.5" stroke="#9c9c9c" stroke-width="1"/><line x1="53" y1="325.5" x2="57" y2="325.5" stroke="#9c9c9c" stroke-width="1"/><line x1="53" y1="335.5" x2="57" y2="335.5" stroke="#9c9c9c" stroke-width="1"/><line x1="53" y1="344.5" x2="57" y2="344.5" stroke="#9c9c9c" stroke-width="1"/><line x1="51" y1="354.5" x2="57" y2="354.5" stroke="#9c9c9c" stroke-width="1"/><line x1="53" y1="363.5" x2="57" y2="363.5" stroke="#9c9c9c" stroke-width="1"/><line x1="53" y1="372.5" x2="57" y2="372.5" stroke="#9c9c9c" stroke-width="1"/><line x1="53" y1="382.5" x2="57" y2="382.5" stroke="#9c9c9c" stroke-width="1"/><line x1="41" y1="391.5" x2="57" y2="391.5" stroke="#9c9c9c" stroke-width="1"/><line x1="53" y1="400.5" x2="57" y2="400.5" stroke="#9c9c9c" stroke-width="1"/><line x1="53" y1="410.5" x2="57" y2="410.5" stroke="#9c9c9c" stroke-width="1"/><line x1="53" y1="419.5" x2="57" y2="419.5" stroke="#9c9c9c" stroke-width="1"/><line x1="51" y1="428.5" x2="57" y2="428.5" stroke="#9c9c9c" stroke-width="1"/><line x1="53" y1="438.5" x2="57" y2="438.5" stroke="#9c9c9c" stroke-width="1"/><line x1="53" y1="447.5" x2="57" y2="447.5" stroke="#9c9c9c" stroke-width="1"/><line x1="53" y1="457.5" x2="57" y2="457.5" stroke="#9c9c9c" stroke-width="1"/><line x1="48" y1="466.5" x2="57" y2="466.5" stroke="#9c9c9c" stroke-width="1"/><line x1="53" y1="475.5" x2="57" y2="475.5" stroke="#9c9c9c" stroke-width="1"/><line x1="53" y1="485.5" x2="57" y2="485.5" stroke="#9c9c9c" stroke-width="1"/><line x1="53" y1="494.5" x2="57" y2="494.5" stroke="#9c9c9c" stroke-width="1"/><line x1="51" y1="504.5" x2="57" y2="504.5" stroke="#9c9c9c" stroke-width="1"/><line x1="53" y1="513.5" x2="57" y2="513.5" stroke="#9c9c9c" stroke-width="1"/><line x1="53" y1="522.5" x2="57" y2="522.5" stroke="#9c9c9c" stroke-width="1"/><line x1="53" y1="532.5" x2="57" y2="532.5" stroke="#9c9c9c" stroke-width="1"/><line x1="41" y1="541.5" x2="57" y2="541.5" stroke="#9c9c9c" stroke-width="1"/><line x1="53" y1="550.5" x2="57" y2="550.5" stroke="#9c9c9c" stroke-width="1"/><line x1="53" y1="560.5" x2="57" y2="560.5" stroke="#9c9c9c" stroke-width="1"/><line x1="53" y1="569.5" x2="57" y2="569.5" stroke="#9c9c9c" stroke-width="1"/><line x1="51" y1="578.5" x2="57" y2="578.5" stroke="#9c9c9c" stroke-width="1"/><line x1="53" y1="588.5" x2="57" y2="588.5" stroke="#9c9c9c" stroke-width="1"/><line x1="53" y1="597.5" x2="57" y2="597.5" stroke="#9c9c9c" stroke-width="1"/><line x1="53" y1="607.5" x2="57" y2="607.5" stroke="#9c9c9c" stroke-width="1"/><line x1="48" y1="616.5" x2="57" y2="616.5" stroke="#9c9c9c" stroke-width="1"/><line x1="53" y1="625.5" x2="57" y2="625.5" stroke="#9c9c9c" stroke-width="1"/><line x1="53" y1="635.5" x2="57" y2="635.5" stroke="#9c9c9c" stroke-width="1"/><line x1="53" y1="644.5" x2="57" y2="644.5" stroke="#9c9c9c" stroke-width="1"/><line x1="51" y1="654.5" x2="57" y2="654.5" stroke="#9c9c9c" stroke-width="1"/><line x1="53" y1="663.5" x2="57" y2="663.5" stroke="#9c9c9c" stroke-width="1"/><line x1="53" y1="672.5" x2="57" y2="672.5" stroke="#9c9c9c" stroke-width="1"/><line x1="53" y1="682.5" x2="57" y2="682.5" stroke="#9c9c9c" stroke-width="1"/><line x1="41" y1="691.5" x2="57" y2="691.5" stroke="#9c9c9c" stroke-width="1"/><line x1="53" y1="700.5" x2="57" y2="700.5" stroke="#9c9c9c" stroke-width="1"/><line x1="53" y1="710.5" x2="57" y2="710.5" stroke="#9c9c9c" stroke-width="1"/><line x1="53" y1="719.5" x2="57" y2="719.5" stroke="#9c9c9c" stroke-width="1"/><line x1="51" y1="728.5" x2="57" y2="728.5" stroke="#9c9c9c" stroke-width="1"/><line x1="53" y1="738.5" x2="57" y2="738.5" stroke="#9c9c9c" stroke-width="1"/><line x1="53" y1="747.5" x2="57" y2="747.5" stroke="#9c9c9c" stroke-width="1"/><line x1="53" y1="757.5" x2="57" y2="757.5" stroke="#9c9c9c" stroke-width="1"/><line x1="48" y1="766.5" x2="57" y2="766.5" stroke="#9c9c9c" stroke-width="1"/><line x1="53" y1="775.5" x2="57" y2="775.5" stroke="#9c9c9c" stroke-width="1"/><line x1="53" y1="785.5" x2="57" y2="785.5" stroke="#9c9c9c" stroke-width="1"/><line x1="53" y1="794.5" x2="57" y2="794.5" stroke="#9c9c9c" stroke-width="1"/><line x1="51" y1="804.5" x2="57" y2="804.5" stroke="#9c9c9c" stroke-width="1"/><line x1="53" y1="813.5" x2="57" y2="813.5" stroke="#9c9c9c" stroke-width="1"/><line x1="53" y1="822.5" x2="57" y2="822.5" stroke="#9c9c9c" stroke-width="1"/><line x1="53" y1="832.5" x2="57" y2="832.5" stroke="#9c9c9c" stroke-width="1"/><line x1="41" y1="841.5" x2="57" y2="841.5" stroke="#9c9c9c" stroke-width="1"/><line x1="53" y1="850.5" x2="57" y2="850.5" stroke="#9c9c9c" stroke-width="1"/><line x1="53" y1="860.5" x2="57" y2="860.5" stroke="#9c9c9c" stroke-width="1"/><line x1="53" y1="869.5" x2="57" y2="869.5" stroke="#9c9c9c" stroke-width="1"/><line x1="51" y1="878.5" x2="57" y2="878.5" stroke="#9c9c9c" stroke-width="1"/><line x1="53" y1="888.5" x2="57" y2="888.5" stroke="#9c9c9c" stroke-width="1"/><line x1="53" y1="897.5" x2="57" y2="897.5" stroke="#9c9c9c" stroke-width="1"/><line x1="53" y1="907.5" x2="57" y2="907.5" stroke="#9c9c9c" stroke-width="1"/><line x1="48" y1="916.5" x2="57" y2="916.5" stroke="#9c9c9c" stroke-width="1"/><line x1="53" y1="925.5" x2="57" y2="925.5" stroke="#9c9c9c" stroke-width="1"/><line x1="53" y1="935.5" x2="57" y2="935.5" stroke="#9c9c9c" stroke-width="1"/><line x1="53" y1="944.5" x2="57" y2="944.5" stroke="#9c9c9c" stroke-width="1"/><line x1="51" y1="954.5" x2="57" y2="954.5" stroke="#9c9c9c" stroke-width="1"/><line x1="53" y1="963.5" x2="57" y2="963.5" stroke="#9c9c9c" stroke-width="1"/><line x1="53" y1="972.5" x2="57" y2="972.5" stroke="#9c9c9c" stroke-width="1"/><line x1="53" y1="982.5" x2="57" y2="982.5" stroke="#9c9c9c" stroke-width="1"/><line x1="41" y1="991.5" x2="57" y2="991.5" stroke="#9c9c9c" stroke-width="1"/><line x1="53" y1="1000.5" x2="57" y2="1000.5" stroke="#9c9c9c" stroke-width="1"/><line x1="53" y1="1010.5" x2="57" y2="1010.5" stroke="#9c9c9c" stroke-width="1"/><line x1="53" y1="1019.5" x2="57" y2="1019.5" stroke="#9c9c9c" stroke-width="1"/></svg>
<div class="t" style="left:140.00px;top:91.84px;font-size:12px;color:#b0b0b0;">2</div>
<div class="t" style="left:290.00px;top:91.84px;font-size:12px;color:#b0b0b0;">1</div>
<div class="t" style="left:440.00px;top:91.84px;font-size:12px;color:#b0b0b0;">0</div>
<div class="t" style="left:590.00px;top:91.84px;font-size:12px;color:#b0b0b0;">1</div>
<div class="t" style="left:740.00px;top:91.84px;font-size:12px;color:#b0b0b0;">2</div>
<div class="t" style="left:890.00px;top:91.84px;font-size:12px;color:#b0b0b0;">3</div>
<div class="t" style="left:1040.00px;top:91.84px;font-size:12px;color:#b0b0b0;">4</div>
<div class="t" style="left:1190.00px;top:91.84px;font-size:12px;color:#b0b0b0;">5</div>
<div class="t" style="left:1340.00px;top:91.84px;font-size:12px;color:#b0b0b0;">6</div>
<div class="t" style="left:1490.00px;top:91.84px;font-size:12px;color:#b0b0b0;">7</div>
<div class="t" style="left:43.00px;top:105.34px;font-size:12px;color:#b0b0b0;">0</div>
<div class="t" style="left:43.00px;top:243.34px;font-size:12px;color:#b0b0b0;">1</div>
<div class="t" style="left:43.00px;top:255.34px;font-size:12px;color:#b0b0b0;">1</div>
<div class="t" style="left:43.00px;top:393.34px;font-size:12px;color:#b0b0b0;">1</div>
<div class="t" style="left:43.00px;top:405.34px;font-size:12px;color:#b0b0b0;">2</div>
<div class="t" style="left:43.00px;top:543.34px;font-size:12px;color:#b0b0b0;">1</div>
<div class="t" style="left:43.00px;top:555.34px;font-size:12px;color:#b0b0b0;">3</div>
<div class="t" style="left:43.00px;top:693.34px;font-size:12px;color:#b0b0b0;">1</div>
<div class="t" style="left:43.00px;top:705.34px;font-size:12px;color:#b0b0b0;">4</div>
<div class="t" style="left:43.00px;top:843.34px;font-size:12px;color:#b0b0b0;">1</div>
<div class="t" style="left:43.00px;top:855.34px;font-size:12px;color:#b0b0b0;">5</div>
<div class="t" style="left:43.00px;top:993.34px;font-size:12px;color:#b0b0b0;">1</div>
<div class="t" style="left:43.00px;top:1005.34px;font-size:12px;color:#b0b0b0;">6</div>
<div class="a" style="left:57px;top:105px;width:1528px;height:918px;background:#807f80;"></div>
<div class="a" style="left:1585px;top:105px;width:26px;height:918px;background:#4d4d4d;"></div>
<div class="a" style="left:1585px;top:105px;width:10px;height:918px;background:#535353;"></div>
<div class="a" style="left:1596px;top:577px;width:13px;height:185px;background:#6b6b6b;"></div>
<svg class="a" style="left:0px;top:0px" width="1920" height="1037"><path d="M1600,100 L1604,96 L1608,100" fill="none" stroke="#8a8a8a" stroke-width="1"/><path d="M1600,1011 L1604,1015 L1608,1011" fill="none" stroke="#8a8a8a" stroke-width="1"/></svg>
<div class="a" style="left:40px;top:1023px;width:1571px;height:14px;background:#474747;"></div>
<div class="a" style="left:89px;top:1023px;width:184px;height:14px;background:#535353;"></div>
<div class="t" style="left:52.50px;top:1027.82px;font-size:10.25px;color:#e4e4e4;letter-spacing:-0.738px;">100%</div>
<div class="t" style="left:131.50px;top:1027.82px;font-size:10.25px;color:#e4e4e4;letter-spacing:-0.278px;">Doc: 6.29M/155.5M</div>
<svg class="a" style="left:0px;top:0px" width="1920" height="1037"><path d="M263,1027 L267,1031 L263,1035" fill="none" stroke="#c8c8c8" stroke-width="1"/><path d="M286,1027 L282,1031 L286,1035" fill="none" stroke="#8a8a8a" stroke-width="1"/></svg>
<div class="a" style="left:663px;top:1023px;width:542px;height:14px;background:#5a5a5a;"></div>
<svg class="a" style="left:0px;top:0px" width="1920" height="1037"><path d="M1584,1027 L1588,1031 L1584,1035" fill="none" stroke="#8a8a8a" stroke-width="1"/></svg>
<div class="a" style="left:1595px;top:1023px;width:16px;height:14px;background:#535353;"></div>
<div id="doc" class="a" style="left:437px;top:105px;width:779px;height:918px;background:#fff;overflow:hidden">
<div class="a" style="left:-437px;top:-105px;width:1920px;height:1037px">
<svg class="a" style="left:0;top:0" width="1920" height="1037"><path d="M1133,92 A30,30 0 0 1 1100,125 L548,125 A30,30 0 0 0 518,155 L518,477 A30,30 0 0 0 548,507 L976.5,507 A30,30 0 0 1 1006.5,537 L1006.5,660" fill="none" stroke="#523424" stroke-width="12"/><path d="M1133,92 A30,30 0 0 1 1100,125 L548,125 A30,30 0 0 0 518,155 L518,477 A30,30 0 0 0 548,507 L976.5,507 A30,30 0 0 1 1006.5,537 L1006.5,660" fill="none" stroke="#7c5034" stroke-width="9"/><path d="M1133,92 A30,30 0 0 1 1100,125 L548,125 A30,30 0 0 0 518,155 L518,477 A30,30 0 0 0 548,507 L976.5,507 A30,30 0 0 1 1006.5,537 L1006.5,660" fill="none" stroke="#a26c4a" stroke-width="5"/><path d="M1133,92 A30,30 0 0 1 1100,125 L548,125 A30,30 0 0 0 518,155 L518,477 A30,30 0 0 0 548,507 L976.5,507 A30,30 0 0 1 1006.5,537 L1006.5,660" fill="none" stroke="#c48862" stroke-width="2"/><rect x="564" y="116" width="8" height="18" fill="#6e4c36"/><rect x="566" y="116" width="3" height="18" fill="#936a4c"/><rect x="1079" y="116" width="8" height="18" fill="#6e4c36"/><rect x="1081" y="116" width="3" height="18" fill="#936a4c"/><rect x="509" y="162" width="18" height="8" fill="#6e4c36"/><rect x="509" y="164" width="18" height="3" fill="#936a4c"/><rect x="509" y="463" width="18" height="8" fill="#6e4c36"/><rect x="509" y="465" width="18" height="3" fill="#936a4c"/><rect x="564" y="499" width="8" height="18" fill="#6e4c36"/><rect x="566" y="499" width="3" height="18" fill="#936a4c"/><rect x="953" y="499" width="8" height="18" fill="#6e4c36"/><rect x="955" y="499" width="3" height="18" fill="#936a4c"/><rect x="998" y="545" width="18" height="8" fill="#6e4c36"/><rect x="998" y="547" width="18" height="3" fill="#936a4c"/></svg>
<svg class="a" style="left:0;top:0" width="1920" height="1037"><defs>
<linearGradient id="gold" x1="0" x2="1" y1="0" y2="0">
<stop offset="0" stop-color="#7d6326"/><stop offset="0.3" stop-color="#c2a553"/><stop offset="0.5" stop-color="#d9c172"/><stop offset="0.75" stop-color="#a88c3c"/><stop offset="1" stop-color="#6e5520"/></linearGradient>
<radialGradient id="goldb" cx="0.42" cy="0.4" r="0.75">
<stop offset="0" stop-color="#d6bf6e"/><stop offset="0.55" stop-color="#b89c48"/><stop offset="1" stop-color="#7e6428"/></radialGradient>
<radialGradient id="plate" cx="0.5" cy="0.45" r="0.55">
<stop offset="0" stop-color="#ffffff"/><stop offset="0.75" stop-color="#f7f7f7"/><stop offset="1" stop-color="#d8d8d8"/></radialGradient>
<radialGradient id="cloudg" cx="0.4" cy="0.3" r="0.8"><stop offset="0" stop-color="#ffffff"/><stop offset="0.6" stop-color="#edf5f9"/><stop offset="1" stop-color="#bcd5e3"/></radialGradient>
<filter id="blur1" x="-20%" y="-20%" width="140%" height="140%"><feGaussianBlur stdDeviation="1"/></filter>
<filter id="blur05"><feGaussianBlur stdDeviation="0.5"/></filter>
<filter id="blur5" x="-50%" y="-50%" width="200%" height="200%"><feGaussianBlur stdDeviation="6"/></filter>
</defs><linearGradient id="cg1" gradientUnits="userSpaceOnUse" x1="0" y1="594" x2="0" y2="632"><stop offset="0" stop-color="#ffffff"/><stop offset="0.45" stop-color="#f3f8fb"/><stop offset="1" stop-color="#b4cfde"/></linearGradient><g opacity="0.95" filter="url(#blur1)" fill="url(#cg1)"><circle cx="846" cy="616" r="10"/><circle cx="858" cy="606" r="11"/><circle cx="870" cy="604" r="9"/><circle cx="878" cy="614" r="10"/><circle cx="862" cy="618" r="10"/><rect x="834" y="618" width="54" height="13" rx="6.5"/></g><linearGradient id="cg2" gradientUnits="userSpaceOnUse" x1="0" y1="560" x2="0" y2="598"><stop offset="0" stop-color="#ffffff"/><stop offset="0.45" stop-color="#f3f8fb"/><stop offset="1" stop-color="#b4cfde"/></linearGradient><g opacity="0.92" filter="url(#blur1)" fill="url(#cg2)"><circle cx="952" cy="586" r="8"/><circle cx="966" cy="578" r="10"/><circle cx="982" cy="570" r="11"/><circle cx="996" cy="576" r="10"/><circle cx="1008" cy="586" r="8"/><circle cx="980" cy="584" r="9"/><rect x="940" y="584" width="78" height="13" rx="6.5"/></g><linearGradient id="cg3" gradientUnits="userSpaceOnUse" x1="0" y1="568" x2="0" y2="590"><stop offset="0" stop-color="#ffffff"/><stop offset="0.45" stop-color="#f3f8fb"/><stop offset="1" stop-color="#b4cfde"/></linearGradient><g opacity="0.9" filter="url(#blur1)" fill="url(#cg3)"><circle cx="1086" cy="579" r="6"/><circle cx="1088" cy="584" r="5"/><rect x="1080" y="580" width="13" height="9" rx="4.5"/></g><g transform="translate(1083,952) rotate(10)"><rect x="-4.5" y="-32" width="9" height="12" fill="#d9535a" transform="rotate(0.0)"/><rect x="-4.5" y="-32" width="9" height="12" fill="#d9535a" transform="rotate(40.0)"/><rect x="-4.5" y="-32" width="9" height="12" fill="#d9535a" transform="rotate(80.0)"/><rect x="-4.5" y="-32" width="9" height="12" fill="#d9535a" transform="rotate(120.0)"/><rect x="-4.5" y="-32" width="9" height="12" fill="#d9535a" transform="rotate(160.0)"/><rect x="-4.5" y="-32" width="9" height="12" fill="#d9535a" transform="rotate(200.0)"/><rect x="-4.5" y="-32" width="9" height="12" fill="#d9535a" transform="rotate(240.0)"/><rect x="-4.5" y="-32" width="9" height="12" fill="#d9535a" transform="rotate(280.0)"/><rect x="-4.5" y="-32" width="9" height="12" fill="#d9535a" transform="rotate(320.0)"/><circle r="24" fill="#d9535a"/><circle r="19.200000000000003" fill="none" stroke="#b63a42" stroke-width="1.2" opacity="0.6"/><circle r="18.240000000000002" fill="#cf4950"/></g><circle cx="1083" cy="944.8" r="5.28" fill="#b63a42"/><circle cx="1082" cy="944.08" r="4.32" fill="#e66a70"/><g transform="translate(906,988) rotate(5)"><rect x="-6.0" y="-56" width="12" height="14" fill="#d9535a" transform="rotate(0.0)"/><rect x="-6.0" y="-56" width="12" height="14" fill="#d9535a" transform="rotate(30.0)"/><rect x="-6.0" y="-56" width="12" height="14" fill="#d9535a" transform="rotate(60.0)"/><rect x="-6.0" y="-56" width="12" height="14" fill="#d9535a" transform="rotate(90.0)"/><rect x="-6.0" y="-56" width="12" height="14" fill="#d9535a" transform="rotate(120.0)"/><rect x="-6.0" y="-56" width="12" height="14" fill="#d9535a" transform="rotate(150.0)"/><rect x="-6.0" y="-56" width="12" height="14" fill="#d9535a" transform="rotate(180.0)"/><rect x="-6.0" y="-56" width="12" height="14" fill="#d9535a" transform="rotate(210.0)"/><rect x="-6.0" y="-56" width="12" height="14" fill="#d9535a" transform="rotate(240.0)"/><rect x="-6.0" y="-56" width="12" height="14" fill="#d9535a" transform="rotate(270.0)"/><rect x="-6.0" y="-56" width="12" height="14" fill="#d9535a" transform="rotate(300.0)"/><rect x="-6.0" y="-56" width="12" height="14" fill="#d9535a" transform="rotate(330.0)"/><circle r="46" fill="#d9535a"/><circle r="36.800000000000004" fill="none" stroke="#b63a42" stroke-width="1.2" opacity="0.6"/><circle r="34.96" fill="#cf4950"/></g><circle cx="906" cy="974.2" r="10.12" fill="#b63a42"/><circle cx="905" cy="972.82" r="8.28" fill="#e66a70"/><g transform="translate(1010,994) rotate(14)"><rect x="-6.0" y="-56" width="12" height="14" fill="#d9535a" transform="rotate(0.0)"/><rect x="-6.0" y="-56" width="12" height="14" fill="#d9535a" transform="rotate(30.0)"/><rect x="-6.0" y="-56" width="12" height="14" fill="#d9535a" transform="rotate(60.0)"/><rect x="-6.0" y="-56" width="12" height="14" fill="#d9535a" transform="rotate(90.0)"/><rect x="-6.0" y="-56" width="12" height="14" fill="#d9535a" transform="rotate(120.0)"/><rect x="-6.0" y="-56" width="12" height="14" fill="#d9535a" transform="rotate(150.0)"/><rect x="-6.0" y="-56" width="12" height="14" fill="#d9535a" transform="rotate(180.0)"/><rect x="-6.0" y="-56" width="12" height="14" fill="#d9535a" transform="rotate(210.0)"/><rect x="-6.0" y="-56" width="12" height="14" fill="#d9535a" transform="rotate(240.0)"/><rect x="-6.0" y="-56" width="12" height="14" fill="#d9535a" transform="rotate(270.0)"/><rect x="-6.0" y="-56" width="12" height="14" fill="#d9535a" transform="rotate(300.0)"/><rect x="-6.0" y="-56" width="12" height="14" fill="#d9535a" transform="rotate(330.0)"/><circle r="46" fill="#d9535a"/><circle r="36.800000000000004" fill="none" stroke="#b63a42" stroke-width="1.2" opacity="0.6"/><circle r="34.96" fill="#cf4950"/></g><circle cx="1010" cy="980.2" r="10.12" fill="#b63a42"/><circle cx="1009" cy="978.82" r="8.28" fill="#e66a70"/><ellipse cx="987" cy="913.5" rx="182" ry="52" fill="#4a4a4a"/><ellipse cx="987" cy="912" rx="182" ry="51.5" fill="url(#plate)"/><ellipse cx="987" cy="907" rx="163" ry="41" fill="none" stroke="#e6e6e6" stroke-width="2.5"/><ellipse cx="987" cy="909" rx="152" ry="35" fill="#fcfcfc"/><path d="M926,886 L984,886 L1003,896 L1003,930 L946,930 L926,920 Z" fill="#ea5a60"/><path d="M926,886 L946,896 L946,930 L926,920 Z" fill="#f6cfd0"/><path d="M926,886 L984,886 L1003,896 L946,896 Z" fill="#f27f83"/><ellipse cx="985" cy="894" rx="41" ry="9" fill="#5e4818"/><rect x="944" y="886" width="82" height="8" fill="url(#gold)"/><ellipse cx="985" cy="886" rx="41" ry="10" fill="url(#gold)"/><ellipse cx="985" cy="885" rx="36" ry="7.5" fill="#c2a553" opacity="0.6"/><path d="M975,822 L996,822 L993,850 L996,856 L1003,880 Q985,886 967,880 L974,856 L977,850 Z" fill="url(#gold)"/><rect x="975" y="849" width="21" height="6" rx="2" fill="#d6bf6e" stroke="#8a6d2a" stroke-width="0.6"/><path d="M922,712 C908,688 876,690 880,724 C884,758 924,782 940,797" fill="none" stroke="#6e5520" stroke-width="7.5"/><path d="M922,712 C908,688 876,690 880,724 C884,758 924,782 940,797" fill="none" stroke="#c4a852" stroke-width="4.5"/><path d="M922,712 C908,688 876,690 880,724 C884,758 924,782 940,797" fill="none" stroke="#e6d28a" stroke-width="1.2"/><path d="M1046,712 C1060,688 1092,690 1088,724 C1084,758 1044,782 1028,797" fill="none" stroke="#6e5520" stroke-width="7.5"/><path d="M1046,712 C1060,688 1092,690 1088,724 C1084,758 1044,782 1028,797" fill="none" stroke="#c4a852" stroke-width="4.5"/><path d="M1046,712 C1060,688 1092,690 1088,724 C1084,758 1044,782 1028,797" fill="none" stroke="#e6d28a" stroke-width="1.2"/><path d="M1044,658 L1075,674 L1054,714 L1028,710 Z" fill="#2a9b98"/><path d="M1058,666 L1075,674 L1058,708 L1044,704 Z" fill="#eef3f3"/><ellipse cx="1052" cy="680" rx="8" ry="9" fill="#e6eeee" transform="rotate(25 1052 680)"/><path d="M1003,651 L1047,651 L1030,708 L986,708 Z" fill="#1f8f8e"/><path d="M1032,651 L1047,651 L1030,708 L1016,706 Z" fill="#f2f5f5"/><ellipse cx="1021" cy="672" rx="11" ry="14" fill="#e8eeee" transform="rotate(20 1021 672)"/><path d="M1008,655 L1016,656 L1013,661 L1005,660 Z" fill="#2a3a8a"/><path d="M1023.0,697.0 L1027.0,683.0" stroke="#333" stroke-width="0.7"/><path d="M1024.4,696.8 L1028.4,682.8" stroke="#333" stroke-width="0.7"/><path d="M1025.8,696.6 L1029.8,682.6" stroke="#333" stroke-width="0.7"/><path d="M1027.2,696.4 L1031.2,682.4" stroke="#333" stroke-width="0.7"/><path d="M1028.6,696.2 L1032.6,682.2" stroke="#333" stroke-width="0.7"/><path d="M1030.0,696.0 L1034.0,682.0" stroke="#333" stroke-width="0.7"/><path d="M1031.4,695.8 L1035.4,681.8" stroke="#333" stroke-width="0.7"/><path d="M1041.0,703.0 L1047.0,692.0" stroke="#333" stroke-width="0.7"/><path d="M1042.4,702.5 L1048.4,691.5" stroke="#333" stroke-width="0.7"/><path d="M1043.8,702.0 L1049.8,691.0" stroke="#333" stroke-width="0.7"/><path d="M1045.2,701.5 L1051.2,690.5" stroke="#333" stroke-width="0.7"/><path d="M1046.6,701.0 L1052.6,690.0" stroke="#333" stroke-width="0.7"/><path d="M1048.0,700.5 L1054.0,689.5" stroke="#333" stroke-width="0.7"/><ellipse cx="965" cy="689" rx="20" ry="21" fill="#a8242b" transform="rotate(15 965 689)"/><ellipse cx="968" cy="686" rx="19" ry="20" fill="#d3343a" transform="rotate(15 968 686)"/><ellipse cx="968" cy="685" rx="9" ry="6.5" fill="#fff" transform="rotate(-25 968 685)"/><ellipse cx="976" cy="712" rx="20" ry="10" fill="#c52d34"/><path d="M939,645 L979,657 L977,666 L937,654 Z" fill="#a8242b"/><path d="M940,641 L980,653 L978,661 L938,649 Z" fill="#d3343a"/><circle cx="965" cy="636" r="9.5" fill="#a8242b"/><circle cx="967" cy="634" r="9" fill="#d3343a"/><circle cx="967" cy="634" r="3" fill="#fff"/><circle cx="949" cy="662" r="9" fill="#a8242b"/><circle cx="951" cy="660" r="8.5" fill="#d3343a"/><circle cx="951" cy="660" r="3" fill="#fff"/><path d="M920,706 L922,745 C925,778 942,808 974,823 L996,823 C1028,808 1043,778 1046,745 L1047,706 Z" fill="url(#goldb)"/><ellipse cx="985" cy="808" rx="26" ry="14" fill="#5a3a18" opacity="0.55" filter="url(#blur5)"/><path d="M930,730 C930,760 940,785 955,800" fill="none" stroke="#e0c878" stroke-width="5" opacity="0.4" filter="url(#blur5)"/><path d="M920,706 Q984,722 1047,706" fill="none" stroke="#dcc577" stroke-width="2.5"/><ellipse cx="984" cy="706" rx="63" ry="9" fill="none" stroke="#c9ae5a" stroke-width="1.5"/><path d="M904,680 L920,670 L942,710 L977,713 L968,740 L920,724 L926,706 Z" fill="#62b88a"/><path d="M928,712 L972,716 L965,736 L924,722 Z" fill="#94d8b4"/><path d="M908,680 L919,674 L936,706 L928,710 Z" fill="#8fd4ae"/><text x="998" y="770" font-family="Liberation Serif" font-weight="700" font-size="56" fill="#7e6228" text-anchor="middle" transform="scale(1,1)">1</text><text x="996.5" y="768.5" font-family="Liberation Serif" font-weight="700" font-size="56" fill="#c8ad58" stroke="#e2cd82" stroke-width="0.8" text-anchor="middle">1</text><path d="M937,793 Q936,803 940,812 L943,811 Q941,802 942,795 Z" fill="#9a7f34"/><path d="M1031,793 Q1032,803 1028,811 L1025,810 Q1027,802 1026,795 Z" fill="#9a7f34"/><g transform="translate(1021,939) rotate(-4)"><text x="2.5" y="2.5" font-family="Liberation Serif" font-weight="700" font-size="54" fill="#9e2229" stroke="#9e2229" stroke-width="2.5" text-anchor="middle" letter-spacing="-1" transform="scale(1.12,1)">100%</text><text x="0" y="0" font-family="Liberation Serif" font-weight="700" font-size="54" fill="#dc3c43" stroke="#dc3c43" stroke-width="2" text-anchor="middle" letter-spacing="-1" transform="scale(1.12,1)">100%</text></g></svg>
<div class="t" style="left:546.50px;top:156.29px;font-size:47.5px;color:#0c1d5b;font-weight:700;letter-spacing:-0.332px;">Simulator de Economii</div>
<div class="t" style="left:547.00px;top:241.46px;font-size:16.0px;color:#1d2656;letter-spacing:-0.011px;">Te invităm să faci un experiment cu Simulatorul de Economii.</div>
<div class="t" style="left:547.00px;top:259.46px;font-size:16.0px;color:#1d2656;letter-spacing:0.088px;">Ar putea fi primul pas pentru a dărui mai mult, economisind.</div>
<div class="t" style="left:789.50px;top:318.50px;font-size:13.0px;color:#1d2656;letter-spacing:-0.103px;">Dacă se acordă tichete de masă</div>
<div class="t" style="left:789.50px;top:455.21px;font-size:12.75px;color:#1d2656;">Dacă se crește salariul brut</div>
<div class="a" style="left:536px;top:340px;width:235px;height:41px;border:1px solid #777;border-radius:20.5px;"></div>
<div class="a" style="left:652px;top:340px;width:1px;height:41px;background:#888"></div>
<div class="t" style="left:569.50px;top:353.78px;font-size:13.25px;color:#1c1c1c;letter-spacing:-0.279px;">10 salariați</div>
<div class="t" style="left:665.00px;top:353.57px;font-size:13.5px;color:#1c1c1c;letter-spacing:-0.282px;">22 zile lucrătoare</div>
<div class="a" style="left:536px;top:400px;width:235px;height:42px;border:2px solid #0c1d5b;border-radius:21.0px;"></div>
<div class="t" style="left:614.00px;top:415.00px;font-size:13.0px;color:#1c1c1c;letter-spacing:-0.807px;">CALCULEAZĂ</div>
<div class="a" style="left:783px;top:340px;width:360px;height:42px;border:1px solid #666;border-radius:21.0px;"></div>
<div class="a" style="left:990px;top:340px;width:154px;height:42px;border:2px solid #94449a;border-radius:21.0px;background:#fff;"></div>
<div class="t" style="left:793.50px;top:354.07px;font-size:13.5px;color:#1c1c1c;letter-spacing:-0.143px;">Total cheltuieli lunare 6679.20 lei</div>
<div class="t" style="left:1003.50px;top:354.07px;font-size:13.5px;color:#1c1c1c;letter-spacing:-0.333px;">Economie 3827.70 lei</div>
<div class="a" style="left:783px;top:401px;width:360px;height:41px;border:1px solid #666;border-radius:20.5px;"></div>
<div class="a" style="left:990px;top:401px;width:154px;height:41px;border:2px solid #2a8dc6;border-radius:20.5px;background:#fff;"></div>
<div class="t" style="left:794.00px;top:414.57px;font-size:13.5px;color:#1c1c1c;letter-spacing:-0.228px;">Valoare impozabilă 6679.20 lei</div>
<div class="t" style="left:1017.00px;top:414.78px;font-size:13.25px;color:#1c1c1c;letter-spacing:-0.424px;">Taxe sociale 37 %</div>
<div class="t" style="left:508.50px;top:548.10px;font-size:36.5px;color:#0c1d5b;font-weight:700;letter-spacing:0.309px;">Testează și câștigă!</div>
<div class="a" style="left:508px;top:633px;width:330px;height:44px;border:2px solid #0c1d5b;border-radius:22.0px;"></div>
<div class="t" style="left:612.00px;top:646.19px;font-size:17.5px;color:#0c1d5b;font-weight:700;letter-spacing:0.404px;">Marele premiu</div>
<div class="t" style="left:510.00px;top:697.09px;font-size:15.25px;color:#1d2656;letter-spacing:0.143px;">EXTRA discount de 100 % pe o perioadă de 3</div>
<div class="t" style="left:510.00px;top:714.68px;font-size:15.5px;color:#1d2656;letter-spacing:0.287px;">luni după terminarea campaniei, la orice</div>
<div class="t" style="left:510.00px;top:732.48px;font-size:15.5px;color:#1d2656;letter-spacing:0.164px;">comandă de tichete sau reîncărcare card de</div>
<div class="t" style="left:510.00px;top:750.28px;font-size:15.5px;color:#1d2656;letter-spacing:0.327px;">tichete de masă</div>
<div class="a" style="left:508px;top:810px;width:300px;height:43px;border:2px solid #0c1d5b;border-radius:21.5px;"></div>
<div class="t" style="left:617.50px;top:823.69px;font-size:17.5px;color:#0c1d5b;font-weight:700;letter-spacing:0.358px;">Premiul II</div>
<div class="t" style="left:510.00px;top:873.09px;font-size:15.25px;color:#1d2656;letter-spacing:0.169px;">EXTRA discount de 100 % pe o perioadă de</div>
<div class="t" style="left:510.00px;top:890.78px;font-size:15.5px;color:#1d2656;letter-spacing:0.246px;">o lună după terminarea campaniei, la orice</div>
<div class="t" style="left:510.00px;top:908.68px;font-size:15.5px;color:#1d2656;letter-spacing:0.164px;">comandă de tichete sau reîncărcare card de</div>
<div class="t" style="left:510.00px;top:926.58px;font-size:15.5px;color:#1d2656;letter-spacing:0.327px;">tichete de masă</div>
<div class="a" style="left:508px;top:985px;width:286px;height:45px;border:2px solid #0c1d5b;border-radius:22.5px;"></div>
<div class="t" style="left:608.00px;top:998.69px;font-size:17.5px;color:#0c1d5b;font-weight:700;letter-spacing:0.336px;">Premiul III</div>
</div>
<div class="a" style="left:0;top:0;width:1px;height:918px;background:repeating-linear-gradient(#fff 0 2px,#9a9a9a 2px 4px)"></div>
<div class="a" style="left:778px;top:0;width:1px;height:918px;background:repeating-linear-gradient(#fff 0 2px,#9a9a9a 2px 4px)"></div>
</div>
<div class="a" style="left:1611px;top:58px;width:2px;height:979px;background:#393939;"></div>
<div class="a" style="left:1613px;top:58px;width:38px;height:979px;background:#535353;"></div>
<div class="a" style="left:1613px;top:58px;width:38px;height:12px;background:#434343;"></div>
<div class="a" style="left:1613px;top:167px;width:38px;height:1px;background:#3f3f3f;"></div>
<div class="a" style="left:1613px;top:168px;width:38px;height:869px;background:#535353;"></div>
<svg class="a" style="left:0px;top:0px" width="1920" height="1037"><path d="M1641,62 L1638,64.5 L1641,67 M1645,62 L1642,64.5 L1645,67" fill="none" stroke="#e0e0e0" stroke-width="1.2"/><rect x="1623" y="74" width="1" height="4" fill="#444"/><rect x="1625" y="74" width="1" height="4" fill="#444"/><rect x="1627" y="74" width="1" height="4" fill="#444"/><rect x="1629" y="74" width="1" height="4" fill="#444"/><rect x="1631" y="74" width="1" height="4" fill="#444"/><rect x="1633" y="74" width="1" height="4" fill="#444"/><rect x="1635" y="74" width="1" height="4" fill="#444"/><rect x="1637" y="74" width="1" height="4" fill="#444"/><rect x="1639" y="74" width="1" height="4" fill="#444"/><rect x="1641" y="74" width="1" height="4" fill="#444"/><rect x="1626" y="85" width="3.5" height="3.5" fill="none" stroke="#e0e0e0" stroke-width="1"/><rect x="1626" y="91" width="3.5" height="3.5" fill="none" stroke="#e0e0e0" stroke-width="1"/><rect x="1625.5" y="97" width="4.5" height="4.5" fill="#e0e0e0"/><path d="M1634,87 Q1641,92 1635,100" fill="none" stroke="#e0e0e0" stroke-width="1.8"/><path d="M1632,84 L1637,85 L1634,89Z" fill="#e0e0e0"/><path d="M1624,121 Q1624,113 1633,113 Q1642,113 1642,120 Q1642,125 1637,124 Q1634,124 1635,127 Q1633,129 1629,128 Q1624,127 1624,121Z" fill="#e0e0e0"/><circle cx="1628" cy="121" r="1.3" fill="#535353"/><circle cx="1631" cy="117" r="1.3" fill="#535353"/><circle cx="1636" cy="117" r="1.3" fill="#535353"/><circle cx="1639" cy="121" r="1.3" fill="#535353"/><circle cx="1632" cy="125" r="1.3" fill="#535353"/><rect x="1624.5" y="142.5" width="16" height="13" fill="none" stroke="#e0e0e0" stroke-width="1.2"/><rect x="1625" y="143" width="15" height="3.5" fill="#e0e0e0" opacity="0.6"/><path d="M1624.5,146.8 H1640.5 M1624.5,151.2 H1640.5 M1629.8,142.5 V155.5 M1635.2,142.5 V155.5" stroke="#e0e0e0" stroke-width="1.2"/></svg>
<div class="a" style="left:1651px;top:58px;width:3px;height:979px;background:#393939;"></div>
<div class="a" style="left:1654px;top:58px;width:266px;height:12px;background:#434343;"></div>
<svg class="a" style="left:0px;top:0px" width="1920" height="1037"><path d="M1907,62 L1910,64.5 L1907,67 M1911,62 L1914,64.5 L1911,67" fill="none" stroke="#e0e0e0" stroke-width="1.2"/></svg>
<div class="a" style="left:1654px;top:70px;width:266px;height:29px;background:#474747;"></div>
<div class="a" style="left:1654px;top:71px;width:62px;height:28px;background:#535353;"></div>
<div class="a" style="left:1716px;top:71px;width:1px;height:28px;background:#3e3e3e;"></div>
<div class="a" style="left:1781px;top:71px;width:1px;height:28px;background:#3e3e3e;"></div>
<div class="a" style="left:1831px;top:71px;width:1px;height:28px;background:#3e3e3e;"></div>
<div class="t" style="left:1663.00px;top:79.82px;font-size:10.25px;color:#f2f2f2;font-weight:700;letter-spacing:-0.357px;">Character</div>
<div class="t" style="left:1725.00px;top:79.82px;font-size:10.25px;color:#b8b8b8;font-weight:700;letter-spacing:-0.337px;">Paragraph</div>
<div class="t" style="left:1791.00px;top:79.82px;font-size:10.25px;color:#b8b8b8;font-weight:700;letter-spacing:-0.548px;">Glyphs</div>
<svg class="a" style="left:0px;top:0px" width="1920" height="1037"><rect x="1904" y="81.0" width="10" height="0.9" fill="#d8d8d8"/><rect x="1904" y="82.6" width="10" height="0.9" fill="#d8d8d8"/><rect x="1904" y="84.2" width="10" height="0.9" fill="#d8d8d8"/><rect x="1904" y="85.8" width="10" height="0.9" fill="#d8d8d8"/><rect x="1904" y="87.4" width="10" height="0.9" fill="#d8d8d8"/></svg>
<div class="a" style="left:1654px;top:99px;width:266px;height:199px;background:#535353;"></div>
<div class="a" style="left:1659px;top:113px;width:118px;height:15px;background:#454545;border:1px solid #3c3c3c;border-radius:2px;"></div>
<div class="a" style="left:1764px;top:114px;width:1px;height:13px;background:#3c3c3c;"></div>
<div class="t" style="left:1663.00px;top:117.82px;font-size:10.25px;color:#e4e4e4;letter-spacing:-0.240px;">PF Bulletin Sans Pro</div>
<div class="a" style="left:1790px;top:113px;width:73px;height:15px;background:#454545;border:1px solid #3c3c3c;border-radius:2px;"></div>
<div class="a" style="left:1848px;top:114px;width:1px;height:13px;background:#3c3c3c;"></div>
<div class="t" style="left:1795.00px;top:117.82px;font-size:10.25px;color:#e4e4e4;letter-spacing:-0.315px;">Regular</div>
<div class="a" style="left:1679px;top:137px;width:74px;height:15px;background:#454545;border:1px solid #3c3c3c;border-radius:2px;"></div>
<div class="a" style="left:1738px;top:138px;width:1px;height:13px;background:#3c3c3c;"></div>
<div class="t" style="left:1683.00px;top:141.32px;font-size:10.25px;color:#e4e4e4;letter-spacing:-0.292px;">22.92 pt</div>
<div class="a" style="left:1793px;top:137px;width:70px;height:15px;background:#454545;border:1px solid #3c3c3c;border-radius:2px;"></div>
<div class="a" style="left:1848px;top:138px;width:1px;height:13px;background:#3c3c3c;"></div>
<div class="t" style="left:1798.00px;top:141.11px;font-size:10.5px;color:#e4e4e4;letter-spacing:-0.185px;">37.5 pt</div>
<div class="a" style="left:1679px;top:157px;width:74px;height:15px;background:#454545;border:1px solid #3c3c3c;border-radius:2px;"></div>
<div class="a" style="left:1738px;top:158px;width:1px;height:13px;background:#3c3c3c;"></div>
<div class="t" style="left:1683.00px;top:161.32px;font-size:10.25px;color:#e4e4e4;letter-spacing:-0.338px;">Metrics</div>
<div class="a" style="left:1793px;top:157px;width:70px;height:15px;background:#454545;border:1px solid #3c3c3c;border-radius:2px;"></div>
<div class="a" style="left:1848px;top:158px;width:1px;height:13px;background:#3c3c3c;"></div>
<div class="t" style="left:1798.00px;top:161.53px;font-size:10.0px;color:#e4e4e4;letter-spacing:-0.891px;">-5</div>
<div class="a" style="left:1679px;top:177px;width:53px;height:15px;background:#454545;border:1px solid #3c3c3c;border-radius:2px;"></div>
<div class="t" style="left:1683.00px;top:181.11px;font-size:10.5px;color:#e4e4e4;letter-spacing:-0.618px;">100%</div>
<div class="a" style="left:1810px;top:177px;width:53px;height:15px;background:#454545;border:1px solid #3c3c3c;border-radius:2px;"></div>
<div class="t" style="left:1814.00px;top:181.11px;font-size:10.5px;color:#e4e4e4;letter-spacing:-0.618px;">100%</div>
<div class="a" style="left:1680px;top:197px;width:54px;height:16px;background:#454545;border:1px solid #3c3c3c;border-radius:2px;"></div>
<div class="t" style="left:1684.00px;top:202.11px;font-size:10.5px;color:#e4e4e4;letter-spacing:-0.171px;">0 pt</div>
<div class="t" style="left:1776.00px;top:202.32px;font-size:10.25px;color:#d0d0d0;letter-spacing:-0.468px;">Color:</div>
<div class="a" style="left:1809px;top:197px;width:56px;height:18px;background:#14146c;border:1px solid #2a2a2a"></div>
<div class="t" style="left:1663.00px;top:135.84px;font-size:17.5px;color:#e0e0e0;font-family:'Liberation Serif',serif;font-weight:700;">T</div>
<div class="t" style="left:1658.00px;top:144.01px;font-size:7.75px;color:#e0e0e0;font-family:'Liberation Serif',serif;font-weight:700;">T</div>
<div class="t" style="left:1658.00px;top:158.90px;font-size:10.75px;color:#e0e0e0;letter-spacing:-0.164px;">V/A</div>
<div class="t" style="left:1664.00px;top:176.34px;font-size:17.5px;color:#e0e0e0;font-family:'Liberation Serif',serif;font-weight:700;">T</div>
<div class="t" style="left:1658.00px;top:197.27px;font-size:11.5px;color:#e0e0e0;">A</div>
<div class="t" style="left:1667.00px;top:196.80px;font-size:8.5px;color:#e0e0e0;">a</div>
<div class="t" style="left:1778.00px;top:140.44px;font-size:7.75px;color:#e0e0e0;">A</div>
<div class="t" style="left:1778.00px;top:147.44px;font-size:7.75px;color:#e0e0e0;">A</div>
<div class="a" style="left:1772px;top:158px;width:18px;height:11px;background:#e0e0e0;"></div>
<div class="t" style="left:1773.00px;top:158.19px;font-size:11.0px;color:#535353;font-weight:700;letter-spacing:1.531px;">VA</div>
<div class="t" style="left:1792.00px;top:175.31px;font-size:15.75px;color:#e0e0e0;font-family:'Liberation Serif',serif;font-weight:700;">T</div>
<svg class="a" style="left:0px;top:0px" width="1920" height="1037"><path d="M1767,120 L1770.5,123.5 L1774,120" fill="none" stroke="#c8c8c8" stroke-width="1.1"/><path d="M1852,120 L1855.5,123.5 L1859,120" fill="none" stroke="#c8c8c8" stroke-width="1.1"/><path d="M1742,143.5 L1745.5,147.0 L1749,143.5" fill="none" stroke="#c8c8c8" stroke-width="1.1"/><path d="M1852,143.5 L1855.5,147.0 L1859,143.5" fill="none" stroke="#c8c8c8" stroke-width="1.1"/><path d="M1742,163.5 L1745.5,167.0 L1749,163.5" fill="none" stroke="#c8c8c8" stroke-width="1.1"/><path d="M1852,163.5 L1855.5,167.0 L1859,163.5" fill="none" stroke="#c8c8c8" stroke-width="1.1"/><path d="M1663,173.5 H1674 M1663,173.5 L1666,171.5 M1663,173.5 L1666,175.5" stroke="#e0e0e0" stroke-width="0.9" fill="none"/><path d="M1660,178 V191 M1660,178 L1658,180.5 M1660,178 L1662,180.5 M1660,191 L1658,188.5 M1660,191 L1662,188.5" stroke="#e0e0e0" stroke-width="0.9" fill="none"/><path d="M1658,209.5 H1666 M1670,206 V213 M1668,208 L1670,206 L1672,208" stroke="#e0e0e0" stroke-width="0.9" fill="none"/><path d="M1777,147.5 H1786 M1777,154.5 H1786 M1774,143 V154" stroke="#e0e0e0" stroke-width="0.9"/><path d="M1772,172 H1790 M1772,172 L1775,170 M1772,172 L1775,174 M1790,172 L1787,170 M1790,172 L1787,174" stroke="#e0e0e0" stroke-width="0.9" fill="none"/><path d="M1790,192 H1806 M1790,192 L1793,190 M1790,192 L1793,194 M1806,192 L1803,190 M1806,192 L1803,194" stroke="#e0e0e0" stroke-width="0.9" fill="none"/></svg>
<div class="t" style="left:1671.00px;top:222.81px;font-size:15.75px;color:#e6e6e6;font-family:'Liberation Serif',serif;font-weight:700;">T</div>
<div class="t" style="left:1695.00px;top:222.81px;font-size:15.75px;color:#e6e6e6;font-family:'Liberation Serif',serif;font-style:italic;">T</div>
<div class="t" style="left:1715.00px;top:224.48px;font-size:13.75px;color:#e6e6e6;font-family:'Liberation Serif',serif;font-weight:700;letter-spacing:-0.343px;">TT</div>
<div class="t" style="left:1739.00px;top:223.65px;font-size:14.75px;color:#e6e6e6;font-family:'Liberation Serif',serif;font-weight:700;letter-spacing:0.915px;">Tт</div>
<div class="t" style="left:1764.00px;top:222.81px;font-size:15.75px;color:#e6e6e6;font-family:'Liberation Serif',serif;font-weight:700;letter-spacing:2.772px;">T¹</div>
<div class="t" style="left:1788.00px;top:222.81px;font-size:15.75px;color:#e6e6e6;font-family:'Liberation Serif',serif;font-weight:700;letter-spacing:2.772px;">T₁</div>
<div class="t" style="left:1815.00px;top:222.81px;font-size:15.75px;color:#e6e6e6;font-family:'Liberation Serif',serif;font-weight:700;">T</div>
<div class="t" style="left:1839.00px;top:222.81px;font-size:15.75px;color:#e6e6e6;font-family:'Liberation Serif',serif;font-weight:700;">T</div>
<svg class="a" style="left:0px;top:0px" width="1920" height="1037"><path d="M1815,238.5 H1827 M1839,231 H1851" stroke="#e6e6e6" stroke-width="1.2"/></svg>
<div class="a" style="left:1666px;top:247px;width:22px;height:22px;background:#383838;border-radius:2px"></div>
<div class="t" style="left:1671.50px;top:250.18px;font-size:16.5px;color:#f0f0f0;font-family:'Liberation Serif',serif;font-weight:700;letter-spacing:0.922px;">fi</div>
<div class="t" style="left:1695.00px;top:248.81px;font-size:15.75px;color:#9a9a9a;font-family:'Liberation Serif',serif;font-style:italic;">ơ</div>
<div class="t" style="left:1718.00px;top:251.23px;font-size:15.25px;color:#e0e0e0;font-family:'Liberation Serif',serif;">ﬆ</div>
<div class="t" style="left:1742.50px;top:249.97px;font-size:16.75px;color:#9a9a9a;font-family:'Liberation Serif',serif;font-style:italic;">A</div>
<div class="t" style="left:1765.00px;top:251.44px;font-size:15.0px;color:#e0e0e0;font-family:'Liberation Serif',serif;font-weight:700;letter-spacing:1.000px;">aa</div>
<svg class="a" style="left:0px;top:0px" width="1920" height="1037"><path d="M1765,251.5 H1781 M1778,249.5 L1781,251.5 L1778,253.5" stroke="#e0e0e0" stroke-width="1" fill="none"/></svg>
<div class="t" style="left:1791.00px;top:249.97px;font-size:16.75px;color:#9a9a9a;font-family:'Liberation Serif',serif;font-style:italic;">T</div>
<div class="t" style="left:1814.00px;top:251.44px;font-size:15px;color:#e0e0e0;font-family:'Liberation Serif',serif;">1</div>
<div class="t" style="left:1822.00px;top:249.62px;font-size:10px;color:#e0e0e0;font-family:'Liberation Serif',serif;">st</div>
<div class="t" style="left:1838.50px;top:250.39px;font-size:16.25px;color:#e0e0e0;font-family:'Liberation Serif',serif;">½</div>
<div class="a" style="left:1659px;top:274px;width:114px;height:20px;background:#454545;border:1px solid #3c3c3c;border-radius:2px;"></div>
<div class="t" style="left:1667.00px;top:280.61px;font-size:10.5px;color:#e4e4e4;letter-spacing:-0.186px;">English: UK</div>
<div class="t" style="left:1779.00px;top:278.30px;font-size:8px;color:#d0d0d0;font-family:'Liberation Serif',serif;">a</div>
<div class="t" style="left:1783.00px;top:279.79px;font-size:11px;color:#d0d0d0;font-family:'Liberation Serif',serif;">a</div>
<div class="a" style="left:1798px;top:274px;width:66px;height:20px;background:#454545;border:1px solid #3c3c3c;border-radius:2px;"></div>
<div class="t" style="left:1806.00px;top:280.82px;font-size:10.25px;color:#e4e4e4;letter-spacing:-0.337px;">Sharp</div>
<svg class="a" style="left:0px;top:0px" width="1920" height="1037"><path d="M1763,283 L1766.5,286.5 L1770,283" fill="none" stroke="#c8c8c8" stroke-width="1.1"/><path d="M1854,283 L1857.5,286.5 L1861,283" fill="none" stroke="#c8c8c8" stroke-width="1.1"/></svg>
<div class="a" style="left:1654px;top:298px;width:266px;height:2px;background:#393939;"></div>
<div class="a" style="left:1654px;top:300px;width:266px;height:28px;background:#474747;"></div>
<div class="a" style="left:1721px;top:300px;width:57px;height:28px;background:#535353;"></div>
<div class="a" style="left:1720px;top:300px;width:1px;height:28px;background:#3e3e3e;"></div>
<div class="a" style="left:1778px;top:300px;width:1px;height:28px;background:#3e3e3e;"></div>
<div class="a" style="left:1856px;top:300px;width:1px;height:28px;background:#3e3e3e;"></div>
<div class="t" style="left:1663.00px;top:306.61px;font-size:10.5px;color:#b8b8b8;font-weight:700;letter-spacing:-0.326px;">Properties</div>
<div class="t" style="left:1730.00px;top:306.82px;font-size:10.25px;color:#f2f2f2;font-weight:700;letter-spacing:-0.412px;">Libraries</div>
<div class="t" style="left:1787.00px;top:306.82px;font-size:10.25px;color:#b8b8b8;font-weight:700;letter-spacing:-0.494px;">Layer Comps</div>
<svg class="a" style="left:0px;top:0px" width="1920" height="1037"><rect x="1904" y="309.0" width="10" height="0.9" fill="#d8d8d8"/><rect x="1904" y="310.6" width="10" height="0.9" fill="#d8d8d8"/><rect x="1904" y="312.2" width="10" height="0.9" fill="#d8d8d8"/><rect x="1904" y="313.8" width="10" height="0.9" fill="#d8d8d8"/><rect x="1904" y="315.4" width="10" height="0.9" fill="#d8d8d8"/></svg>
<div class="a" style="left:1654px;top:327px;width:266px;height:341px;background:#383838;"></div>
<svg class="a" style="left:0px;top:0px" width="1920" height="1037"><circle cx="1666.5" cy="342.5" r="3.5" fill="none" stroke="#bdbdbd" stroke-width="1.2"/><path d="M1669,345 L1671.5,347.5" stroke="#bdbdbd" stroke-width="1.3"/></svg>
<div class="t" style="left:1677.00px;top:338.40px;font-size:10.75px;color:#5f5f5f;font-style:italic;letter-spacing:-0.134px;">Search libraries and Adobe Stock</div>
<div class="a" style="left:1660px;top:354px;width:252px;height:1px;background:#444;"></div>
<div class="a" style="left:1662px;top:363px;width:248px;height:18px;background:#303030;border:1px solid #444;border-radius:1px;"></div>
<div class="t" style="left:1673.00px;top:369.48px;font-size:11.25px;color:#cfcfcf;letter-spacing:-0.167px;">My Library</div>
<svg class="a" style="left:0px;top:0px" width="1920" height="1037"><path d="M1897,372 L1900.0,375.0 L1903,372" fill="none" stroke="#d0d0d0" stroke-width="1.1"/></svg>
<div class="t" style="left:1662.00px;top:394.48px;font-size:11.25px;color:#bdbdbd;letter-spacing:-0.143px;">View by type</div>
<svg class="a" style="left:0px;top:0px" width="1920" height="1037"><path d="M1729,399 L1732.0,402.0 L1735,399" fill="none" stroke="#bdbdbd" stroke-width="1.1"/></svg>
<div class="a" style="left:1869px;top:389px;width:18px;height:18px;background:#262626;border-radius:2px"></div>
<svg class="a" style="left:0px;top:0px" width="1920" height="1037"><rect x="1872" y="392" width="5" height="5" fill="#bdbdbd"/><rect x="1879" y="392" width="5" height="5" fill="#bdbdbd"/><rect x="1872" y="399" width="5" height="5" fill="#bdbdbd"/><rect x="1879" y="399" width="5" height="5" fill="#bdbdbd"/><rect x="1893" y="392" width="2" height="2" fill="#bdbdbd"/><rect x="1897" y="392.5" width="10" height="1" fill="#bdbdbd"/><rect x="1893" y="397" width="2" height="2" fill="#bdbdbd"/><rect x="1897" y="397.5" width="10" height="1" fill="#bdbdbd"/><rect x="1893" y="402" width="2" height="2" fill="#bdbdbd"/><rect x="1897" y="402.5" width="10" height="1" fill="#bdbdbd"/></svg>
<svg class="a" style="left:0px;top:0px" width="1920" height="1037"><path d="M1906,427 L1910,423 L1914,427" fill="none" stroke="#555" stroke-width="1"/><rect x="1906" y="431" width="8" height="16" fill="#464646"/><path d="M1906,632 L1910,636 L1914,632" fill="none" stroke="#555" stroke-width="1"/></svg>
<svg class="a" style="left:0px;top:0px" width="1920" height="1037"><path d="M1890,652.5 H1899 M1893,652.5 V650.5 H1896 V652.5 M1891,654 V662.5 H1898 V654 M1893.5,655 V661 M1895.5,655 V661" fill="none" stroke="#6a6a6a" stroke-width="1"/></svg>
<svg class="a" style="left:0px;top:0px" width="1920" height="1037"><path d="M1686,414 L1694,405 L1702,414Z" fill="#fff"/></svg>
<div class="a" style="left:1659px;top:413px;width:230px;height:255px;background:#ffffff;border-radius:3px 3px 0 0"></div>
<svg class="a" style="left:0px;top:0px" width="1920" height="1037"><defs><linearGradient id="libbg" x1="0" y1="0" x2="1" y2="1"><stop offset="0" stop-color="#7fcdf0"/><stop offset="0.5" stop-color="#a9dcf4"/><stop offset="1" stop-color="#6cc3ea"/></linearGradient><linearGradient id="eye" x1="0" y1="0" x2="1" y2="1"><stop offset="0" stop-color="#3a6aa0"/><stop offset="0.3" stop-color="#6a3a6a"/><stop offset="0.6" stop-color="#b4502a"/><stop offset="1" stop-color="#e08a30"/></linearGradient><radialGradient id="iris"><stop offset="0" stop-color="#111"/><stop offset="0.35" stop-color="#1a1a1a"/><stop offset="0.4" stop-color="#2a7fc0"/><stop offset="1" stop-color="#8acff0"/></radialGradient></defs><clipPath id="libclip"><rect x="1662" y="415" width="225" height="128"/></clipPath><g clip-path="url(#libclip)"><rect x="1662" y="415" width="225" height="128" fill="url(#libbg)"/><path d="M1662,543 L1722,415" stroke="#d8f0fb" stroke-width="2" opacity="0.5"/><path d="M1680,543 L1740,415" stroke="#d8f0fb" stroke-width="2" opacity="0.5"/><path d="M1698,543 L1758,415" stroke="#d8f0fb" stroke-width="2" opacity="0.5"/><path d="M1716,543 L1776,415" stroke="#d8f0fb" stroke-width="2" opacity="0.5"/><path d="M1734,543 L1794,415" stroke="#d8f0fb" stroke-width="2" opacity="0.5"/><path d="M1752,543 L1812,415" stroke="#d8f0fb" stroke-width="2" opacity="0.5"/><path d="M1770,543 L1830,415" stroke="#d8f0fb" stroke-width="2" opacity="0.5"/><path d="M1788,543 L1848,415" stroke="#d8f0fb" stroke-width="2" opacity="0.5"/><path d="M1806,543 L1866,415" stroke="#d8f0fb" stroke-width="2" opacity="0.5"/><path d="M1824,543 L1884,415" stroke="#d8f0fb" stroke-width="2" opacity="0.5"/><path d="M1842,543 L1902,415" stroke="#d8f0fb" stroke-width="2" opacity="0.5"/><path d="M1860,543 L1920,415" stroke="#d8f0fb" stroke-width="2" opacity="0.5"/><path d="M1878,543 L1938,415" stroke="#d8f0fb" stroke-width="2" opacity="0.5"/><path d="M1896,543 L1956,415" stroke="#d8f0fb" stroke-width="2" opacity="0.5"/><rect x="1684" y="422" width="181" height="114" rx="2" fill="#2b3f4a"/><clipPath id="boardclip"><rect x="1684" y="422" width="181" height="114"/></clipPath><g clip-path="url(#boardclip)"><path d="M1700,536 L1760,422" stroke="#3a5260" stroke-width="1" opacity="0.6"/><path d="M1724,536 L1784,422" stroke="#3a5260" stroke-width="1" opacity="0.6"/><path d="M1748,536 L1808,422" stroke="#3a5260" stroke-width="1" opacity="0.6"/><path d="M1772,536 L1832,422" stroke="#3a5260" stroke-width="1" opacity="0.6"/><path d="M1796,536 L1856,422" stroke="#3a5260" stroke-width="1" opacity="0.6"/><path d="M1820,536 L1880,422" stroke="#3a5260" stroke-width="1" opacity="0.6"/><path d="M1844,536 L1904,422" stroke="#3a5260" stroke-width="1" opacity="0.6"/><path d="M1868,536 L1928,422" stroke="#3a5260" stroke-width="1" opacity="0.6"/></g><rect x="1730" y="430" width="41" height="34" rx="2" fill="#dcdcdc"/><rect x="1735" y="434" width="42" height="34" rx="2" fill="#fbfbfb"/><text x="1756" y="458" font-family="Liberation Serif" font-style="italic" font-size="16" fill="#4e4e6e" text-anchor="middle">Aa</text><rect x="1673" y="478" width="80" height="45" rx="2" fill="#e0583c"/><rect x="1700" y="478" width="27" height="6" fill="#4a4a7a"/><rect x="1727" y="478" width="26" height="6" fill="#2a2a6a"/><rect x="1679.5" y="484" width="28" height="45" rx="1" fill="#fdb45a"/><rect x="1707" y="484" width="27" height="45" fill="#0ea0d6"/><rect x="1734" y="484" width="27" height="45" rx="1" fill="#9929f5"/><rect x="1788" y="453" width="81" height="65" rx="2" fill="#1c8fb0"/><rect x="1788" y="490" width="10" height="25" fill="#c9b0c8"/><clipPath id="eyeclip"><rect x="1796" y="459" width="80" height="66" rx="2"/></clipPath><g clip-path="url(#eyeclip)"><filter id="eblur"><feGaussianBlur stdDeviation="2.5"/></filter><g filter="url(#eblur)"><rect x="1790" y="455" width="90" height="75" fill="#7a3a2a"/><ellipse cx="1812" cy="470" rx="28" ry="18" fill="#3a4a8a" opacity="0.85"/><ellipse cx="1840" cy="468" rx="26" ry="12" fill="#5a2a5a" opacity="0.8"/><ellipse cx="1872" cy="478" rx="20" ry="26" fill="#d0602a" opacity="0.85"/><ellipse cx="1830" cy="520" rx="40" ry="14" fill="#e8a030" opacity="0.9"/><ellipse cx="1806" cy="512" rx="14" ry="14" fill="#d88a30" opacity="0.8"/><ellipse cx="1866" cy="515" rx="14" ry="12" fill="#e06a2a" opacity="0.8"/></g><ellipse cx="1840" cy="494" rx="24" ry="10" fill="#3d5f8a"/><ellipse cx="1841" cy="493" rx="17" ry="8" fill="#dfe6ea"/><circle cx="1840" cy="493" r="7.5" fill="url(#iris)"/><path d="M1822,497 Q1840,506 1860,496" stroke="#2e5e8e" stroke-width="2.5" fill="none"/></g></g></svg>
<div class="t" style="left:1674.00px;top:561.00px;font-size:13.0px;color:#1e1e1e;font-weight:700;letter-spacing:-0.079px;">Set up libraries your way</div>
<div class="t" style="left:1673.00px;top:593.21px;font-size:12.75px;color:#3a3a3a;letter-spacing:0.127px;">Use custom groups to organize</div>
<div class="t" style="left:1673.00px;top:608.71px;font-size:12.75px;color:#3a3a3a;letter-spacing:0.059px;">items for faster, easier access.</div>
<div class="a" style="left:1675px;top:640px;width:117px;height:28px;background:#2680eb;border-radius:14px"></div>
<div class="t" style="left:1689.00px;top:650.00px;font-size:13.0px;color:#ffffff;font-weight:700;letter-spacing:0.034px;">View by group</div>
<div class="t" style="left:1812.50px;top:648.78px;font-size:13.25px;color:#2c2c2c;letter-spacing:0.151px;">Cancel</div>
<div class="a" style="left:1654px;top:668px;width:266px;height:1px;background:#393939;"></div>
<div class="a" style="left:1654px;top:669px;width:266px;height:29px;background:#474747;"></div>
<div class="a" style="left:1654px;top:669px;width:47px;height:29px;background:#535353;"></div>
<div class="a" style="left:1701px;top:669px;width:1px;height:29px;background:#3e3e3e;"></div>
<div class="t" style="left:1663.00px;top:677.82px;font-size:10.25px;color:#f2f2f2;font-weight:700;letter-spacing:-0.610px;">Layers</div>
<svg class="a" style="left:0px;top:0px" width="1920" height="1037"><rect x="1904" y="680.0" width="10" height="0.9" fill="#d8d8d8"/><rect x="1904" y="681.6" width="10" height="0.9" fill="#d8d8d8"/><rect x="1904" y="683.2" width="10" height="0.9" fill="#d8d8d8"/><rect x="1904" y="684.8" width="10" height="0.9" fill="#d8d8d8"/><rect x="1904" y="686.4" width="10" height="0.9" fill="#d8d8d8"/></svg>
<div class="a" style="left:1654px;top:698px;width:266px;height:339px;background:#535353;"></div>
<div class="a" style="left:1658px;top:706px;width:87px;height:20px;background:#454545;border:1px solid #3c3c3c;border-radius:2px;"></div>
<div class="t" style="left:1680.00px;top:711.98px;font-size:11.25px;color:#e4e4e4;letter-spacing:-0.172px;">Kind</div>
<svg class="a" style="left:0px;top:0px" width="1920" height="1037"><circle cx="1666" cy="715" r="3.5" fill="none" stroke="#e0e0e0" stroke-width="1.3"/><path d="M1668.5,717.5 L1671,720" stroke="#e0e0e0" stroke-width="1.5"/><path d="M1734,714 L1737.5,717.5 L1741,714" fill="none" stroke="#c8c8c8" stroke-width="1.1"/><rect x="1756.5" y="711.5" width="11" height="9" fill="none" stroke="#e0e0e0" stroke-width="1"/><path d="M1758,719 L1761,715 L1763,717 L1764.5,715.5 L1766.5,719Z" fill="#e0e0e0"/><circle cx="1787" cy="716" r="5" fill="none" stroke="#e0e0e0" stroke-width="1.2"/><path d="M1783.5,719.5 A5,5 0 0 1 1790.5,712.5Z" fill="#e0e0e0"/><path d="M1806,711 H1817 V713.5 M1806,711 V713.5 M1811.5,711 V721 M1809,721 H1814" stroke="#e0e0e0" stroke-width="1.8" fill="none"/><rect x="1830.5" y="711.5" width="9" height="9" fill="none" stroke="#e0e0e0" stroke-width="1"/><rect x="1829" y="710" width="3" height="3" fill="#e0e0e0"/><rect x="1838" y="710" width="3" height="3" fill="#e0e0e0"/><rect x="1829" y="719" width="3" height="3" fill="#e0e0e0"/><rect x="1838" y="719" width="3" height="3" fill="#e0e0e0"/><path d="M1856,710.5 H1861.5 L1863.5,712.5 V720.5 H1856Z" fill="none" stroke="#e0e0e0" stroke-width="1"/><rect x="1853.5" y="716" width="5" height="5" fill="#e0e0e0"/><rect x="1877" y="709" width="8" height="15" rx="4" fill="#444"/><circle cx="1881" cy="711" r="3.3" fill="#e6e6e6"/></svg>
<div class="a" style="left:1654px;top:729px;width:266px;height:1px;background:#4a4a4a;"></div>
<div class="a" style="left:1658px;top:735px;width:128px;height:19px;background:#454545;border:1px solid #3c3c3c;border-radius:2px;"></div>
<div class="t" style="left:1666.00px;top:741.03px;font-size:10.0px;color:#e4e4e4;letter-spacing:-0.553px;">Pass Through</div>
<div class="t" style="left:1793.00px;top:740.61px;font-size:10.5px;color:#d0d0d0;letter-spacing:-0.359px;">Opacity:</div>
<div class="a" style="left:1834px;top:735px;width:52px;height:19px;background:#454545;border:1px solid #3c3c3c;border-radius:2px;"></div>
<div class="a" style="left:1869px;top:736px;width:1px;height:17px;background:#3c3c3c;"></div>
<div class="t" style="left:1839.00px;top:740.61px;font-size:10.5px;color:#e4e4e4;letter-spacing:-0.618px;">100%</div>
<svg class="a" style="left:0px;top:0px" width="1920" height="1037"><path d="M1774,744 L1777.5,747.5 L1781,744" fill="none" stroke="#c8c8c8" stroke-width="1.1"/><path d="M1874,743 L1877.0,746.0 L1880,743" fill="none" stroke="#c8c8c8" stroke-width="1.1"/></svg>
<div class="a" style="left:1654px;top:759px;width:266px;height:1px;background:#4a4a4a;"></div>
<div class="t" style="left:1660.00px;top:769.32px;font-size:10.25px;color:#d0d0d0;letter-spacing:-0.374px;">Lock:</div>
<svg class="a" style="left:0px;top:0px" width="1920" height="1037"><rect x="1693.0" y="766.0" width="2.7" height="2.7" fill="#bdbdbd"/><rect x="1693.0" y="771.4" width="2.7" height="2.7" fill="#bdbdbd"/><rect x="1695.7" y="768.7" width="2.7" height="2.7" fill="#bdbdbd"/><rect x="1695.7" y="774.1" width="2.7" height="2.7" fill="#bdbdbd"/><rect x="1698.4" y="766.0" width="2.7" height="2.7" fill="#bdbdbd"/><rect x="1698.4" y="771.4" width="2.7" height="2.7" fill="#bdbdbd"/><rect x="1701.1" y="768.7" width="2.7" height="2.7" fill="#bdbdbd"/><rect x="1701.1" y="774.1" width="2.7" height="2.7" fill="#bdbdbd"/><rect x="1693" y="766" width="10.8" height="10.8" fill="none" stroke="#9a9a9a" stroke-width="0.6"/><path d="M1716,778 L1724,768 L1726,766 L1727,767 L1725,769 L1717,779Z" fill="#bdbdbd"/><path d="M1742.5,765 V779 M1735.5,772 H1749.5" stroke="#bdbdbd" stroke-width="1.2"/><path d="M1742.5,764.5 L1740.5,767 H1744.5Z M1742.5,779.5 L1740.5,777 H1744.5Z M1735,772 L1737.5,770 V774Z M1750,772 L1747.5,770 V774Z" fill="#bdbdbd"/><rect x="1760.5" y="767.5" width="10" height="10" fill="none" stroke="#bdbdbd" stroke-width="1.1"/><path d="M1758,767.5 H1773 M1760.5,765 V780" stroke="#bdbdbd" stroke-width="1.1"/><rect x="1781" y="771" width="10" height="8" fill="#e0e0e0"/><path d="M1783,771 V768 A3,3 0 0 1 1789,768 V771" fill="none" stroke="#e0e0e0" stroke-width="1.3"/></svg>
<div class="t" style="left:1815.00px;top:769.03px;font-size:10.0px;color:#d0d0d0;letter-spacing:-0.387px;">Fill:</div>
<div class="a" style="left:1834px;top:764px;width:50px;height:15px;background:#454545;border:1px solid #3c3c3c;border-radius:2px;"></div>
<div class="a" style="left:1869px;top:765px;width:1px;height:13px;background:#3c3c3c;"></div>
<div class="t" style="left:1839.00px;top:768.11px;font-size:10.5px;color:#e4e4e4;letter-spacing:-0.618px;">100%</div>
<svg class="a" style="left:0px;top:0px" width="1920" height="1037"><path d="M1873,770 L1876.0,773.0 L1879,770" fill="none" stroke="#c8c8c8" stroke-width="1.1"/></svg>
<div class="a" style="left:1654px;top:788px;width:266px;height:1px;background:#474747;"></div>
<div class="a" style="left:1685px;top:788px;width:1px;height:23px;background:#4a4a4a;"></div>
<div class="a" style="left:1654px;top:811px;width:266px;height:1px;background:#474747;"></div>
<div class="a" style="left:1685px;top:811px;width:1px;height:25px;background:#4a4a4a;"></div>
<div class="a" style="left:1654px;top:836px;width:266px;height:1px;background:#474747;"></div>
<div class="a" style="left:1685px;top:836px;width:1px;height:25px;background:#4a4a4a;"></div>
<div class="a" style="left:1654px;top:861px;width:266px;height:1px;background:#474747;"></div>
<div class="a" style="left:1685px;top:861px;width:1px;height:41px;background:#4a4a4a;"></div>
<div class="a" style="left:1654px;top:902px;width:266px;height:1px;background:#474747;"></div>
<div class="a" style="left:1685px;top:902px;width:1px;height:41px;background:#4a4a4a;"></div>
<div class="a" style="left:1654px;top:943px;width:266px;height:1px;background:#474747;"></div>
<div class="a" style="left:1685px;top:943px;width:1px;height:41px;background:#4a4a4a;"></div>
<div class="a" style="left:1654px;top:984px;width:266px;height:1px;background:#474747;"></div>
<div class="a" style="left:1685px;top:984px;width:1px;height:28px;background:#4a4a4a;"></div>
<div class="a" style="left:1685px;top:789px;width:218px;height:22px;background:#696969;"></div>
<svg class="a" style="left:0px;top:0px" width="1920" height="1037"><path d="M1663,800 Q1669.5,794 1676,800 Q1669.5,806 1663,800Z" fill="#e6e6e6"/><circle cx="1669.5" cy="800" r="2.4" fill="#535353"/><circle cx="1669.5" cy="800" r="1.2" fill="#e6e6e6"/><path d="M1663,825 Q1669.5,819 1676,825 Q1669.5,831 1663,825Z" fill="#e6e6e6"/><circle cx="1669.5" cy="825" r="2.4" fill="#535353"/><circle cx="1669.5" cy="825" r="1.2" fill="#e6e6e6"/><path d="M1663,850 Q1669.5,844 1676,850 Q1669.5,856 1663,850Z" fill="#e6e6e6"/><circle cx="1669.5" cy="850" r="2.4" fill="#535353"/><circle cx="1669.5" cy="850" r="1.2" fill="#e6e6e6"/><path d="M1663,884 Q1669.5,878 1676,884 Q1669.5,890 1663,884Z" fill="#e6e6e6"/><circle cx="1669.5" cy="884" r="2.4" fill="#535353"/><circle cx="1669.5" cy="884" r="1.2" fill="#e6e6e6"/><path d="M1663,925 Q1669.5,919 1676,925 Q1669.5,931 1663,925Z" fill="#e6e6e6"/><circle cx="1669.5" cy="925" r="2.4" fill="#535353"/><circle cx="1669.5" cy="925" r="1.2" fill="#e6e6e6"/><path d="M1663,966 Q1669.5,960 1676,966 Q1669.5,972 1663,966Z" fill="#e6e6e6"/><circle cx="1669.5" cy="966" r="2.4" fill="#535353"/><circle cx="1669.5" cy="966" r="1.2" fill="#e6e6e6"/><path d="M1663,1006 Q1669.5,1000 1676,1006 Q1669.5,1012 1663,1006Z" fill="#e6e6e6"/><circle cx="1669.5" cy="1006" r="2.4" fill="#535353"/><circle cx="1669.5" cy="1006" r="1.2" fill="#e6e6e6"/><path d="M1688,797 L1692,801 L1696,797" fill="none" stroke="#d0d0d0" stroke-width="1"/><path d="M1700,795 H1705 L1706.5,797 H1714 V805 H1700Z" fill="none" stroke="#e0e0e0" stroke-width="1.3"/><rect x="1700" y="798.5" width="14" height="6.5" fill="#e0e0e0"/><path d="M1706,821 L1710,825 L1706,829" fill="none" stroke="#d0d0d0" stroke-width="1"/><path d="M1716,819 H1721 L1722.5,821 H1730 V829 H1716Z" fill="#e0e0e0"/><path d="M1706,846 L1710,850 L1706,854" fill="none" stroke="#d0d0d0" stroke-width="1"/><path d="M1716,844 H1721 L1722.5,846 H1730 V854 H1716Z" fill="#e0e0e0"/><path d="M1714,875 H1726 V877.5 M1714,875 V877.5 M1720,875 V890 M1717,890 H1722" stroke="#e0e0e0" stroke-width="1.6" fill="none"/><path d="M1726,884 L1732,894 H1720Z" fill="#e0e0e0"/><rect x="1725.5" y="887" width="1" height="4" fill="#535353"/><rect x="1725.5" y="892" width="1" height="1" fill="#535353"/><path d="M1714,916 H1726 V918.5 M1714,916 V918.5 M1720,916 V931 M1717,931 H1722" stroke="#e0e0e0" stroke-width="1.6" fill="none"/><path d="M1726,925 L1732,935 H1720Z" fill="#e0e0e0"/><rect x="1725.5" y="928" width="1" height="4" fill="#535353"/><rect x="1725.5" y="933" width="1" height="1" fill="#535353"/><path d="M1714,957 H1726 V959.5 M1714,957 V959.5 M1720,957 V972 M1717,972 H1722" stroke="#e0e0e0" stroke-width="1.6" fill="none"/><path d="M1726,966 L1732,976 H1720Z" fill="#e0e0e0"/><rect x="1725.5" y="969" width="1" height="4" fill="#535353"/><rect x="1725.5" y="974" width="1" height="1" fill="#535353"/><path d="M1714,997 H1726 V999.5 M1714,997 V999.5 M1720,997 V1012 M1717,1012 H1722" stroke="#e0e0e0" stroke-width="1.6" fill="none"/><path d="M1726,1006 L1732,1016 H1720Z" fill="#e0e0e0"/><rect x="1725.5" y="1009" width="1" height="4" fill="#535353"/><rect x="1725.5" y="1014" width="1" height="1" fill="#535353"/></svg>
<div class="t" style="left:1726.00px;top:796.82px;font-size:10.25px;color:#f0f0f0;letter-spacing:-0.364px;">Layer 1</div>
<div class="t" style="left:1743.00px;top:821.11px;font-size:10.5px;color:#e4e4e4;letter-spacing:-0.241px;">&lt;Group&gt;</div>
<div class="t" style="left:1743.00px;top:846.11px;font-size:10.5px;color:#e4e4e4;letter-spacing:-0.241px;">&lt;Group&gt;</div>
<div class="t" style="left:1745.00px;top:879.11px;font-size:10.5px;color:#e4e4e4;letter-spacing:-0.270px;">Testează pache...count la serv</div>
<div class="t" style="left:1745.00px;top:920.11px;font-size:10.5px;color:#e4e4e4;letter-spacing:-0.202px;">Cum ar fi să e...ând dăruiești?</div>
<div class="t" style="left:1745.00px;top:961.11px;font-size:10.5px;color:#e4e4e4;letter-spacing:-0.170px;">Bonus: conving....2019* și poț</div>
<div class="t" style="left:1745.00px;top:1001.32px;font-size:10.25px;color:#e4e4e4;letter-spacing:-0.284px;">Vrei să ne con...031.005.12.38</div>
<div class="a" style="left:1903px;top:788px;width:1px;height:224px;background:#474747;"></div>
<svg class="a" style="left:0px;top:0px" width="1920" height="1037"><path d="M1906,800 L1910,796 L1914,800" fill="none" stroke="#8a8a8a" stroke-width="1"/><rect x="1906" y="806" width="8" height="64" fill="#6a6a6a"/><path d="M1906,1001 L1910,1005 L1914,1001" fill="none" stroke="#8a8a8a" stroke-width="1"/></svg>
<div class="a" style="left:1654px;top:1012px;width:266px;height:25px;background:#535353;"></div>
<div class="a" style="left:1654px;top:1012px;width:266px;height:1px;background:#474747;"></div>
<svg class="a" style="left:0px;top:0px" width="1920" height="1037"><rect x="1717" y="1023" width="7" height="5" rx="2.5" fill="none" stroke="#8a8a8a" stroke-width="1.2"/><rect x="1724" y="1023" width="7" height="5" rx="2.5" fill="none" stroke="#8a8a8a" stroke-width="1.2"/></svg>
<div class="t" style="left:1745.00px;top:1018.86px;font-size:14.5px;color:#e0e0e0;font-family:'Liberation Serif',serif;font-style:italic;letter-spacing:1.535px;">fx</div>
<svg class="a" style="left:0px;top:0px" width="1920" height="1037"><rect x="1771" y="1020" width="12" height="10" fill="#e0e0e0"/><circle cx="1777" cy="1025" r="3" fill="#535353"/><circle cx="1804.5" cy="1025.5" r="5" fill="none" stroke="#e0e0e0" stroke-width="1.2"/><path d="M1801,1029 A5,5 0 0 1 1808,1022Z" fill="#e0e0e0"/><path d="M1825,1020 H1830 L1831.5,1022 H1838 V1030 H1825Z" fill="#e0e0e0"/><rect x="1853.5" y="1019.5" width="10" height="10" fill="none" stroke="#e0e0e0" stroke-width="1.2"/><path d="M1858.5,1021.5 V1027.5 M1855.5,1024.5 H1861.5" stroke="#e0e0e0" stroke-width="1.2"/><path d="M1879,1021.5 H1890 M1882,1021.5 V1019.5 H1887 V1021.5 M1880.5,1023 V1031.5 H1888.5 V1023 M1883,1024 V1030 M1886,1024 V1030" fill="none" stroke="#e0e0e0" stroke-width="1.1"/><path d="M1754,1033 L1756,1035 L1758,1033Z M1809,1033 L1811,1035 L1813,1033Z" fill="#e0e0e0"/></svg>
</body></html>
